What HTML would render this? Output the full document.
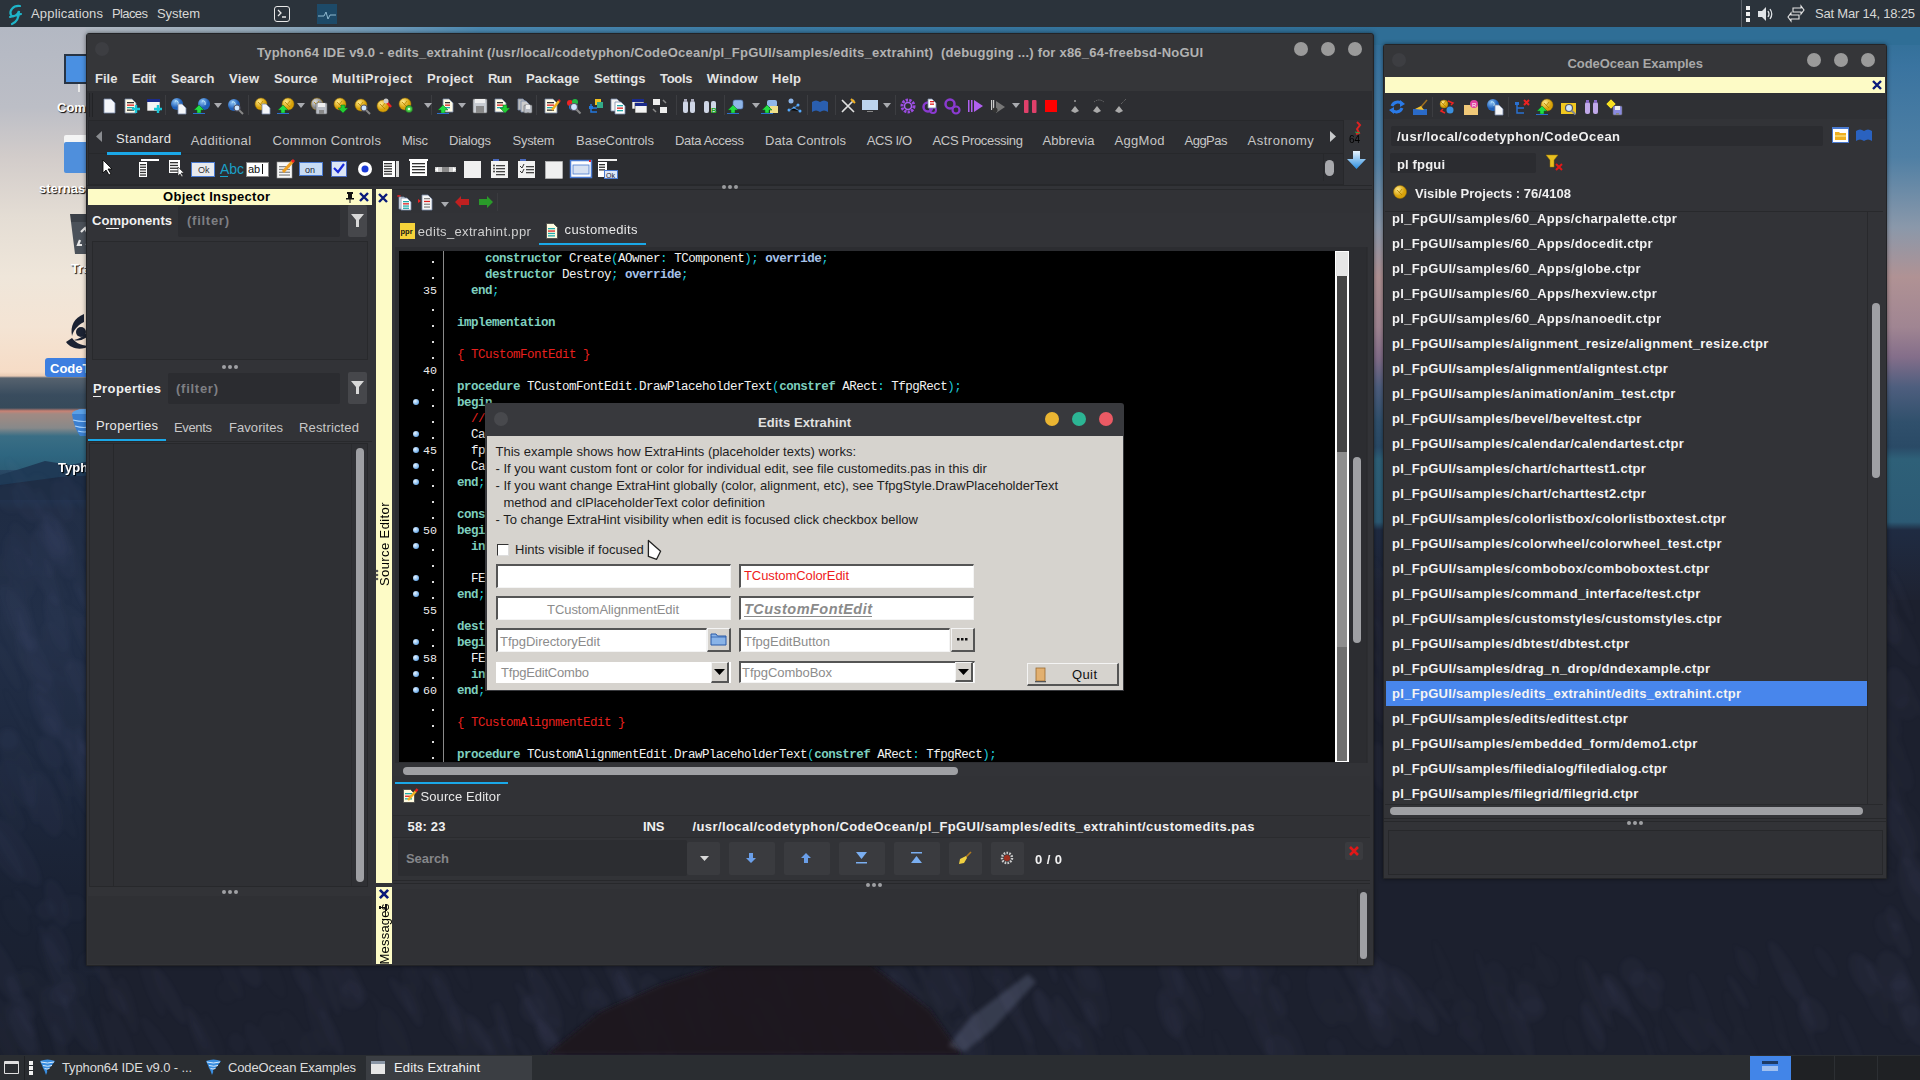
<!DOCTYPE html><html><head><meta charset="utf-8"><style>
*{margin:0;padding:0;box-sizing:border-box}
html,body{width:1920px;height:1080px;overflow:hidden;background:#222a3a}
body{position:relative;font-family:'Liberation Sans',sans-serif;font-size:13px;color:#ddd}
.a{position:absolute}
.t{position:absolute;white-space:pre;line-height:1}
svg.a{overflow:visible}
</style></head><body><div class="a" style="left:0;top:0;width:1920px;height:1080px;background:#1c202e"></div><div class="a" style="left:0;top:27px;width:300px;height:473px;background:linear-gradient(to bottom,#b3b8c3 0px,#bcbec6 80px,#d2ccca 130px,#e4ddd4 190px,#efe6da 250px,#f4e4d4 300px,#f6dcc6 345px,#e9cbb4 349px,#56626e 351px,#394c5e 368px,#364a5a 381px,#c98274 384px,#a08a84 387px,#9b8a84 391px,#87898a 401px,#3a6e85 409px,#2e6680 428px,#2c5d76 443px,#2a4f68 453px,#253449 465px,#1e2231 473px)"></div><div class="a" style="left:0;top:470px;width:100px;height:590px;background:linear-gradient(to bottom,#2a4a66 0px,#1f3350 22px,#1f2c44 40px,#222f48 150px,#1d283e 300px,#1a2234 420px,#1a1f2d 590px)"></div><svg class="a" style="left:0px;top:455px;" width="100" height="45" viewBox="0 0 100 45"><path d="M0 20 L20 14 L45 6 L70 10 L100 4 L100 45 L0 45 Z" fill="#1f3a56"/><path d="M0 30 L30 26 L60 22 L100 20 L100 45 L0 45 Z" fill="#1d2c44"/></svg><div class="a" style="left:1300px;top:27px;width:620px;height:573px;background:linear-gradient(to bottom,#2f6e96 0px,#3a74a0 40px,#4f7fa4 130px,#8a98aa 200px,#b09294 250px,#a08592 300px,#846e8a 330px,#4e5e7e 360px,#30506c 395px,#2a4a66 420px,#2e6078 432px,#2c5a74 495px,#1f2b42 503px,#1e2231 573px)"></div><div class="a" style="left:86px;top:27px;width:1834px;height:18px;background:linear-gradient(to right,#b0b8c2 0px,#98acbc 164px,#6a98b8 314px,#4a88b0 394px,#3a7aa3 714px,#2f6e96 1294px,#2f6e96 1834px)"></div><svg class="a" style="left:0;top:0" width="1920" height="1080" viewBox="0 0 1920 1080"><defs><filter id="bl"><feGaussianBlur stdDeviation="6"/></filter><filter id="b2"><feGaussianBlur stdDeviation="2"/></filter></defs><g filter="url(#b2)"><ellipse cx="41" cy="659" rx="13" ry="24" transform="rotate(-23 41 659)" fill="rgba(150,170,210,0.02)"/><ellipse cx="17" cy="644" rx="10" ry="34" transform="rotate(-29 17 644)" fill="rgba(150,170,210,0.01)"/><ellipse cx="8" cy="739" rx="11" ry="11" transform="rotate(-16 8 739)" fill="rgba(150,170,210,0.03)"/><ellipse cx="59" cy="677" rx="5" ry="10" transform="rotate(-34 59 677)" fill="rgba(150,170,210,0.02)"/><ellipse cx="17" cy="557" rx="3" ry="24" transform="rotate(-18 17 557)" fill="rgba(150,170,210,0.02)"/><ellipse cx="47" cy="685" rx="8" ry="30" transform="rotate(-29 47 685)" fill="rgba(150,170,210,0.02)"/><ellipse cx="90" cy="799" rx="12" ry="31" transform="rotate(-30 90 799)" fill="rgba(150,170,210,0.02)"/><ellipse cx="26" cy="502" rx="11" ry="22" transform="rotate(-27 26 502)" fill="rgba(150,170,210,0.03)"/><ellipse cx="86" cy="751" rx="3" ry="16" transform="rotate(-26 86 751)" fill="rgba(150,170,210,0.03)"/><ellipse cx="88" cy="607" rx="4" ry="29" transform="rotate(-30 88 607)" fill="rgba(150,170,210,0.03)"/><ellipse cx="8" cy="586" rx="14" ry="33" transform="rotate(-30 8 586)" fill="rgba(150,170,210,0.01)"/><ellipse cx="9" cy="499" rx="12" ry="15" transform="rotate(-26 9 499)" fill="rgba(150,170,210,0.02)"/><ellipse cx="17" cy="714" rx="4" ry="29" transform="rotate(-27 17 714)" fill="rgba(150,170,210,0.01)"/><ellipse cx="19" cy="566" rx="14" ry="34" transform="rotate(-17 19 566)" fill="rgba(150,170,210,0.02)"/><ellipse cx="19" cy="606" rx="12" ry="29" transform="rotate(-15 19 606)" fill="rgba(150,170,210,0.01)"/><ellipse cx="19" cy="563" rx="11" ry="20" transform="rotate(-34 19 563)" fill="rgba(150,170,210,0.02)"/><ellipse cx="8" cy="666" rx="6" ry="28" transform="rotate(-26 8 666)" fill="rgba(150,170,210,0.02)"/><ellipse cx="86" cy="635" rx="9" ry="36" transform="rotate(-32 86 635)" fill="rgba(150,170,210,0.01)"/><ellipse cx="82" cy="742" rx="6" ry="16" transform="rotate(-16 82 742)" fill="rgba(150,170,210,0.03)"/><ellipse cx="18" cy="784" rx="13" ry="28" transform="rotate(-33 18 784)" fill="rgba(150,170,210,0.02)"/><ellipse cx="3" cy="788" rx="6" ry="31" transform="rotate(-19 3 788)" fill="rgba(150,170,210,0.02)"/><ellipse cx="54" cy="574" rx="5" ry="32" transform="rotate(-30 54 574)" fill="rgba(150,170,210,0.01)"/><ellipse cx="50" cy="753" rx="10" ry="18" transform="rotate(-31 50 753)" fill="rgba(150,170,210,0.03)"/><ellipse cx="1" cy="566" rx="8" ry="12" transform="rotate(-28 1 566)" fill="rgba(150,170,210,0.01)"/><ellipse cx="51" cy="522" rx="7" ry="37" transform="rotate(-22 51 522)" fill="rgba(150,170,210,0.03)"/><ellipse cx="62" cy="667" rx="5" ry="11" transform="rotate(-17 62 667)" fill="rgba(150,170,210,0.01)"/><ellipse cx="63" cy="788" rx="3" ry="29" transform="rotate(-20 63 788)" fill="rgba(150,170,210,0.02)"/><ellipse cx="29" cy="800" rx="4" ry="26" transform="rotate(-17 29 800)" fill="rgba(150,170,210,0.03)"/><ellipse cx="66" cy="705" rx="12" ry="37" transform="rotate(-21 66 705)" fill="rgba(150,170,210,0.02)"/><ellipse cx="81" cy="759" rx="8" ry="34" transform="rotate(-24 81 759)" fill="rgba(150,170,210,0.03)"/><ellipse cx="56" cy="602" rx="9" ry="28" transform="rotate(-22 56 602)" fill="rgba(150,170,210,0.01)"/><ellipse cx="89" cy="762" rx="11" ry="22" transform="rotate(-23 89 762)" fill="rgba(150,170,210,0.03)"/><ellipse cx="40" cy="748" rx="4" ry="33" transform="rotate(-23 40 748)" fill="rgba(150,170,210,0.01)"/><ellipse cx="43" cy="554" rx="11" ry="25" transform="rotate(-17 43 554)" fill="rgba(150,170,210,0.03)"/><ellipse cx="23" cy="484" rx="6" ry="30" transform="rotate(-32 23 484)" fill="rgba(150,170,210,0.02)"/><ellipse cx="82" cy="691" rx="8" ry="37" transform="rotate(-22 82 691)" fill="rgba(150,170,210,0.02)"/><ellipse cx="18" cy="618" rx="12" ry="37" transform="rotate(-27 18 618)" fill="rgba(150,170,210,0.03)"/><ellipse cx="52" cy="581" rx="4" ry="25" transform="rotate(-18 52 581)" fill="rgba(150,170,210,0.03)"/><ellipse cx="64" cy="784" rx="6" ry="15" transform="rotate(-29 64 784)" fill="rgba(150,170,210,0.02)"/><ellipse cx="19" cy="612" rx="10" ry="25" transform="rotate(-18 19 612)" fill="rgba(150,170,210,0.02)"/><ellipse cx="88" cy="625" rx="4" ry="11" transform="rotate(-34 88 625)" fill="rgba(150,170,210,0.03)"/><ellipse cx="64" cy="663" rx="6" ry="34" transform="rotate(-32 64 663)" fill="rgba(150,170,210,0.01)"/><ellipse cx="41" cy="488" rx="12" ry="17" transform="rotate(-34 41 488)" fill="rgba(150,170,210,0.01)"/><ellipse cx="57" cy="623" rx="10" ry="30" transform="rotate(-16 57 623)" fill="rgba(150,170,210,0.03)"/><ellipse cx="62" cy="544" rx="8" ry="15" transform="rotate(-26 62 544)" fill="rgba(150,170,210,0.01)"/><ellipse cx="64" cy="537" rx="6" ry="20" transform="rotate(-25 64 537)" fill="rgba(150,170,210,0.03)"/><ellipse cx="55" cy="722" rx="7" ry="34" transform="rotate(-33 55 722)" fill="rgba(150,170,210,0.03)"/><ellipse cx="84" cy="711" rx="4" ry="24" transform="rotate(-17 84 711)" fill="rgba(150,170,210,0.03)"/><ellipse cx="34" cy="662" rx="13" ry="34" transform="rotate(-26 34 662)" fill="rgba(150,170,210,0.03)"/><ellipse cx="59" cy="546" rx="11" ry="35" transform="rotate(-21 59 546)" fill="rgba(150,170,210,0.03)"/><ellipse cx="19" cy="768" rx="14" ry="39" transform="rotate(-19 19 768)" fill="rgba(150,170,210,0.02)"/><ellipse cx="29" cy="771" rx="12" ry="20" transform="rotate(-26 29 771)" fill="rgba(150,170,210,0.01)"/><ellipse cx="50" cy="726" rx="8" ry="11" transform="rotate(-34 50 726)" fill="rgba(150,170,210,0.03)"/><ellipse cx="72" cy="535" rx="7" ry="34" transform="rotate(-32 72 535)" fill="rgba(150,170,210,0.01)"/><ellipse cx="46" cy="712" rx="12" ry="31" transform="rotate(-25 46 712)" fill="rgba(150,170,210,0.03)"/><ellipse cx="85" cy="508" rx="5" ry="26" transform="rotate(-20 85 508)" fill="rgba(150,170,210,0.02)"/><ellipse cx="57" cy="647" rx="12" ry="27" transform="rotate(-27 57 647)" fill="rgba(150,170,210,0.02)"/><ellipse cx="76" cy="768" rx="5" ry="36" transform="rotate(-25 76 768)" fill="rgba(150,170,210,0.03)"/><ellipse cx="52" cy="544" rx="9" ry="25" transform="rotate(-34 52 544)" fill="rgba(150,170,210,0.03)"/><ellipse cx="87" cy="645" rx="7" ry="34" transform="rotate(-25 87 645)" fill="rgba(150,170,210,0.02)"/><ellipse cx="62" cy="501" rx="9" ry="22" transform="rotate(-17 62 501)" fill="rgba(150,170,210,0.03)"/><ellipse cx="24" cy="631" rx="4" ry="23" transform="rotate(-17 24 631)" fill="rgba(150,170,210,0.03)"/><ellipse cx="43" cy="582" rx="5" ry="29" transform="rotate(-32 43 582)" fill="rgba(150,170,210,0.03)"/><ellipse cx="70" cy="487" rx="5" ry="17" transform="rotate(-29 70 487)" fill="rgba(150,170,210,0.03)"/><ellipse cx="32" cy="678" rx="4" ry="32" transform="rotate(-25 32 678)" fill="rgba(150,170,210,0.01)"/><ellipse cx="23" cy="543" rx="9" ry="23" transform="rotate(-27 23 543)" fill="rgba(150,170,210,0.02)"/><ellipse cx="48" cy="531" rx="5" ry="29" transform="rotate(-24 48 531)" fill="rgba(150,170,210,0.03)"/><ellipse cx="77" cy="676" rx="12" ry="17" transform="rotate(-19 77 676)" fill="rgba(150,170,210,0.03)"/><ellipse cx="81" cy="581" rx="6" ry="38" transform="rotate(-15 81 581)" fill="rgba(150,170,210,0.02)"/><ellipse cx="80" cy="523" rx="6" ry="32" transform="rotate(-33 80 523)" fill="rgba(150,170,210,0.02)"/><ellipse cx="75" cy="908" rx="12" ry="14" transform="rotate(-21 75 908)" fill="rgba(150,170,210,0.02)"/><ellipse cx="2" cy="851" rx="11" ry="37" transform="rotate(-33 2 851)" fill="rgba(150,170,210,0.03)"/><ellipse cx="46" cy="993" rx="9" ry="31" transform="rotate(-34 46 993)" fill="rgba(150,170,210,0.01)"/><ellipse cx="10" cy="810" rx="9" ry="25" transform="rotate(-32 10 810)" fill="rgba(150,170,210,0.02)"/><ellipse cx="17" cy="852" rx="12" ry="40" transform="rotate(-33 17 852)" fill="rgba(150,170,210,0.03)"/><ellipse cx="6" cy="1043" rx="8" ry="33" transform="rotate(-26 6 1043)" fill="rgba(150,170,210,0.02)"/><ellipse cx="46" cy="910" rx="10" ry="10" transform="rotate(-18 46 910)" fill="rgba(150,170,210,0.03)"/><ellipse cx="16" cy="916" rx="11" ry="22" transform="rotate(-32 16 916)" fill="rgba(150,170,210,0.01)"/><ellipse cx="46" cy="804" rx="13" ry="34" transform="rotate(-18 46 804)" fill="rgba(150,170,210,0.03)"/><ellipse cx="57" cy="903" rx="10" ry="25" transform="rotate(-19 57 903)" fill="rgba(150,170,210,0.03)"/><ellipse cx="23" cy="1032" rx="11" ry="33" transform="rotate(-27 23 1032)" fill="rgba(150,170,210,0.03)"/><ellipse cx="81" cy="1024" rx="11" ry="33" transform="rotate(-27 81 1024)" fill="rgba(150,170,210,0.03)"/><ellipse cx="65" cy="818" rx="7" ry="24" transform="rotate(-28 65 818)" fill="rgba(150,170,210,0.01)"/><ellipse cx="57" cy="959" rx="6" ry="38" transform="rotate(-28 57 959)" fill="rgba(150,170,210,0.03)"/><ellipse cx="59" cy="945" rx="9" ry="22" transform="rotate(-22 59 945)" fill="rgba(150,170,210,0.03)"/><ellipse cx="63" cy="994" rx="14" ry="11" transform="rotate(-20 63 994)" fill="rgba(150,170,210,0.03)"/><ellipse cx="23" cy="902" rx="4" ry="16" transform="rotate(-33 23 902)" fill="rgba(150,170,210,0.02)"/><ellipse cx="23" cy="1031" rx="9" ry="25" transform="rotate(-24 23 1031)" fill="rgba(150,170,210,0.03)"/><ellipse cx="90" cy="963" rx="12" ry="12" transform="rotate(-20 90 963)" fill="rgba(150,170,210,0.02)"/><ellipse cx="4" cy="1037" rx="5" ry="24" transform="rotate(-25 4 1037)" fill="rgba(150,170,210,0.01)"/><ellipse cx="1382" cy="589" rx="13" ry="23" transform="rotate(-23 1382 589)" fill="rgba(150,170,210,0.02)"/><ellipse cx="1377" cy="701" rx="10" ry="27" transform="rotate(-21 1377 701)" fill="rgba(150,170,210,0.02)"/><ellipse cx="1376" cy="567" rx="6" ry="11" transform="rotate(-20 1376 567)" fill="rgba(150,170,210,0.01)"/><ellipse cx="1378" cy="1004" rx="11" ry="12" transform="rotate(-16 1378 1004)" fill="rgba(150,170,210,0.03)"/><ellipse cx="1371" cy="1008" rx="8" ry="24" transform="rotate(-30 1371 1008)" fill="rgba(150,170,210,0.03)"/><ellipse cx="1380" cy="1024" rx="11" ry="24" transform="rotate(-19 1380 1024)" fill="rgba(150,170,210,0.03)"/><ellipse cx="1382" cy="617" rx="10" ry="24" transform="rotate(-34 1382 617)" fill="rgba(150,170,210,0.02)"/><ellipse cx="1381" cy="622" rx="8" ry="30" transform="rotate(-30 1381 622)" fill="rgba(150,170,210,0.02)"/><ellipse cx="1382" cy="768" rx="12" ry="26" transform="rotate(-16 1382 768)" fill="rgba(150,170,210,0.03)"/><ellipse cx="1385" cy="678" rx="4" ry="37" transform="rotate(-23 1385 678)" fill="rgba(150,170,210,0.03)"/><ellipse cx="1377" cy="694" rx="11" ry="27" transform="rotate(-22 1377 694)" fill="rgba(150,170,210,0.02)"/><ellipse cx="1385" cy="654" rx="6" ry="39" transform="rotate(-17 1385 654)" fill="rgba(150,170,210,0.03)"/><ellipse cx="1882" cy="590" rx="6" ry="23" transform="rotate(-33 1882 590)" fill="rgba(150,170,210,0.03)"/><ellipse cx="1902" cy="596" rx="4" ry="30" transform="rotate(-22 1902 596)" fill="rgba(150,170,210,0.02)"/><ellipse cx="1895" cy="797" rx="5" ry="20" transform="rotate(-18 1895 797)" fill="rgba(150,170,210,0.03)"/><ellipse cx="1883" cy="619" rx="12" ry="29" transform="rotate(-31 1883 619)" fill="rgba(150,170,210,0.03)"/><ellipse cx="1897" cy="688" rx="12" ry="21" transform="rotate(-15 1897 688)" fill="rgba(150,170,210,0.03)"/><ellipse cx="1893" cy="832" rx="11" ry="38" transform="rotate(-28 1893 832)" fill="rgba(150,170,210,0.02)"/><ellipse cx="1884" cy="993" rx="4" ry="12" transform="rotate(-25 1884 993)" fill="rgba(150,170,210,0.02)"/><ellipse cx="1907" cy="708" rx="12" ry="12" transform="rotate(-22 1907 708)" fill="rgba(150,170,210,0.02)"/><ellipse cx="1883" cy="710" rx="11" ry="31" transform="rotate(-32 1883 710)" fill="rgba(150,170,210,0.02)"/><ellipse cx="1894" cy="919" rx="7" ry="14" transform="rotate(-24 1894 919)" fill="rgba(150,170,210,0.03)"/><ellipse cx="1917" cy="1025" rx="13" ry="23" transform="rotate(-29 1917 1025)" fill="rgba(150,170,210,0.03)"/><ellipse cx="1893" cy="758" rx="13" ry="37" transform="rotate(-28 1893 758)" fill="rgba(150,170,210,0.02)"/><ellipse cx="1895" cy="740" rx="7" ry="22" transform="rotate(-24 1895 740)" fill="rgba(150,170,210,0.01)"/><ellipse cx="1912" cy="828" rx="12" ry="27" transform="rotate(-20 1912 828)" fill="rgba(150,170,210,0.01)"/><ellipse cx="1915" cy="699" rx="3" ry="25" transform="rotate(-24 1915 699)" fill="rgba(150,170,210,0.02)"/><ellipse cx="1919" cy="882" rx="12" ry="12" transform="rotate(-19 1919 882)" fill="rgba(150,170,210,0.02)"/><ellipse cx="1883" cy="600" rx="11" ry="37" transform="rotate(-22 1883 600)" fill="rgba(150,170,210,0.01)"/><ellipse cx="1886" cy="929" rx="10" ry="17" transform="rotate(-20 1886 929)" fill="rgba(150,170,210,0.02)"/><ellipse cx="1901" cy="939" rx="7" ry="20" transform="rotate(-22 1901 939)" fill="rgba(150,170,210,0.03)"/><ellipse cx="1900" cy="826" rx="11" ry="31" transform="rotate(-27 1900 826)" fill="rgba(150,170,210,0.03)"/><ellipse cx="1913" cy="890" rx="12" ry="34" transform="rotate(-17 1913 890)" fill="rgba(150,170,210,0.03)"/><ellipse cx="1918" cy="877" rx="9" ry="31" transform="rotate(-27 1918 877)" fill="rgba(150,170,210,0.03)"/><ellipse cx="1897" cy="632" rx="11" ry="40" transform="rotate(-32 1897 632)" fill="rgba(150,170,210,0.02)"/><ellipse cx="1888" cy="770" rx="6" ry="39" transform="rotate(-29 1888 770)" fill="rgba(150,170,210,0.01)"/><ellipse cx="1885" cy="881" rx="12" ry="15" transform="rotate(-26 1885 881)" fill="rgba(150,170,210,0.01)"/><ellipse cx="1121" cy="1047" rx="3" ry="13" transform="rotate(-31 1121 1047)" fill="rgba(150,170,210,0.01)"/><ellipse cx="452" cy="1029" rx="10" ry="17" transform="rotate(-29 452 1029)" fill="rgba(150,170,210,0.01)"/><ellipse cx="331" cy="1032" rx="6" ry="26" transform="rotate(-25 331 1032)" fill="rgba(150,170,210,0.03)"/><ellipse cx="500" cy="1045" rx="13" ry="20" transform="rotate(-16 500 1045)" fill="rgba(150,170,210,0.02)"/><ellipse cx="927" cy="983" rx="4" ry="38" transform="rotate(-27 927 983)" fill="rgba(150,170,210,0.03)"/><ellipse cx="1013" cy="1010" rx="6" ry="40" transform="rotate(-30 1013 1010)" fill="rgba(150,170,210,0.03)"/><ellipse cx="21" cy="1006" rx="7" ry="34" transform="rotate(-23 21 1006)" fill="rgba(150,170,210,0.03)"/><ellipse cx="302" cy="977" rx="7" ry="18" transform="rotate(-25 302 977)" fill="rgba(150,170,210,0.03)"/><ellipse cx="1223" cy="1054" rx="6" ry="26" transform="rotate(-20 1223 1054)" fill="rgba(150,170,210,0.01)"/><ellipse cx="3" cy="1038" rx="12" ry="35" transform="rotate(-30 3 1038)" fill="rgba(150,170,210,0.01)"/><ellipse cx="1376" cy="971" rx="8" ry="24" transform="rotate(-23 1376 971)" fill="rgba(150,170,210,0.03)"/><ellipse cx="1646" cy="990" rx="12" ry="23" transform="rotate(-33 1646 990)" fill="rgba(150,170,210,0.03)"/><ellipse cx="1587" cy="981" rx="9" ry="26" transform="rotate(-18 1587 981)" fill="rgba(150,170,210,0.01)"/><ellipse cx="598" cy="991" rx="4" ry="19" transform="rotate(-21 598 991)" fill="rgba(150,170,210,0.02)"/><ellipse cx="691" cy="1026" rx="4" ry="22" transform="rotate(-16 691 1026)" fill="rgba(150,170,210,0.02)"/><ellipse cx="1593" cy="1023" rx="3" ry="21" transform="rotate(-30 1593 1023)" fill="rgba(150,170,210,0.03)"/><ellipse cx="1083" cy="1005" rx="3" ry="40" transform="rotate(-31 1083 1005)" fill="rgba(150,170,210,0.03)"/><ellipse cx="1183" cy="989" rx="7" ry="26" transform="rotate(-28 1183 989)" fill="rgba(150,170,210,0.02)"/><ellipse cx="753" cy="1024" rx="6" ry="16" transform="rotate(-28 753 1024)" fill="rgba(150,170,210,0.03)"/><ellipse cx="1814" cy="1014" rx="11" ry="20" transform="rotate(-33 1814 1014)" fill="rgba(150,170,210,0.03)"/><ellipse cx="270" cy="971" rx="10" ry="31" transform="rotate(-27 270 971)" fill="rgba(150,170,210,0.01)"/><ellipse cx="1607" cy="1017" rx="4" ry="17" transform="rotate(-33 1607 1017)" fill="rgba(150,170,210,0.01)"/><ellipse cx="781" cy="969" rx="13" ry="23" transform="rotate(-22 781 969)" fill="rgba(150,170,210,0.02)"/><ellipse cx="1472" cy="1038" rx="7" ry="20" transform="rotate(-35 1472 1038)" fill="rgba(150,170,210,0.02)"/><ellipse cx="769" cy="1027" rx="14" ry="34" transform="rotate(-23 769 1027)" fill="rgba(150,170,210,0.03)"/><ellipse cx="36" cy="993" rx="7" ry="30" transform="rotate(-27 36 993)" fill="rgba(150,170,210,0.01)"/><ellipse cx="978" cy="1035" rx="12" ry="28" transform="rotate(-20 978 1035)" fill="rgba(150,170,210,0.01)"/><ellipse cx="1734" cy="1013" rx="7" ry="25" transform="rotate(-21 1734 1013)" fill="rgba(150,170,210,0.01)"/><ellipse cx="1895" cy="1010" rx="11" ry="35" transform="rotate(-16 1895 1010)" fill="rgba(150,170,210,0.01)"/><ellipse cx="1204" cy="980" rx="4" ry="17" transform="rotate(-21 1204 980)" fill="rgba(150,170,210,0.02)"/><ellipse cx="632" cy="1048" rx="7" ry="24" transform="rotate(-16 632 1048)" fill="rgba(150,170,210,0.01)"/><ellipse cx="260" cy="1046" rx="9" ry="27" transform="rotate(-30 260 1046)" fill="rgba(150,170,210,0.02)"/><ellipse cx="1746" cy="1054" rx="12" ry="28" transform="rotate(-19 1746 1054)" fill="rgba(150,170,210,0.01)"/><ellipse cx="554" cy="1045" rx="6" ry="27" transform="rotate(-31 554 1045)" fill="rgba(150,170,210,0.03)"/><ellipse cx="1052" cy="969" rx="3" ry="15" transform="rotate(-16 1052 969)" fill="rgba(150,170,210,0.03)"/><ellipse cx="1264" cy="991" rx="10" ry="32" transform="rotate(-23 1264 991)" fill="rgba(150,170,210,0.02)"/><ellipse cx="1543" cy="964" rx="5" ry="24" transform="rotate(-27 1543 964)" fill="rgba(150,170,210,0.01)"/><ellipse cx="1093" cy="978" rx="9" ry="18" transform="rotate(-28 1093 978)" fill="rgba(150,170,210,0.02)"/><ellipse cx="1232" cy="966" rx="10" ry="14" transform="rotate(-23 1232 966)" fill="rgba(150,170,210,0.03)"/><ellipse cx="902" cy="1000" rx="10" ry="31" transform="rotate(-20 902 1000)" fill="rgba(150,170,210,0.03)"/><ellipse cx="933" cy="1054" rx="12" ry="36" transform="rotate(-26 933 1054)" fill="rgba(150,170,210,0.02)"/><ellipse cx="1087" cy="1046" rx="9" ry="26" transform="rotate(-17 1087 1046)" fill="rgba(150,170,210,0.02)"/><ellipse cx="616" cy="967" rx="11" ry="37" transform="rotate(-23 616 967)" fill="rgba(150,170,210,0.03)"/><ellipse cx="1444" cy="990" rx="10" ry="12" transform="rotate(-26 1444 990)" fill="rgba(150,170,210,0.01)"/><ellipse cx="965" cy="999" rx="4" ry="31" transform="rotate(-30 965 999)" fill="rgba(150,170,210,0.02)"/><ellipse cx="588" cy="999" rx="6" ry="12" transform="rotate(-16 588 999)" fill="rgba(150,170,210,0.03)"/><ellipse cx="1278" cy="1043" rx="8" ry="34" transform="rotate(-20 1278 1043)" fill="rgba(150,170,210,0.02)"/><ellipse cx="1088" cy="1046" rx="4" ry="34" transform="rotate(-24 1088 1046)" fill="rgba(150,170,210,0.01)"/><ellipse cx="1826" cy="962" rx="6" ry="19" transform="rotate(-34 1826 962)" fill="rgba(150,170,210,0.02)"/><ellipse cx="1719" cy="1038" rx="7" ry="21" transform="rotate(-34 1719 1038)" fill="rgba(150,170,210,0.02)"/><ellipse cx="60" cy="1046" rx="6" ry="25" transform="rotate(-15 60 1046)" fill="rgba(150,170,210,0.03)"/><ellipse cx="907" cy="981" rx="6" ry="38" transform="rotate(-31 907 981)" fill="rgba(150,170,210,0.03)"/><ellipse cx="1609" cy="995" rx="8" ry="15" transform="rotate(-15 1609 995)" fill="rgba(150,170,210,0.03)"/><ellipse cx="388" cy="1021" rx="5" ry="36" transform="rotate(-33 388 1021)" fill="rgba(150,170,210,0.01)"/><ellipse cx="1393" cy="991" rx="13" ry="36" transform="rotate(-32 1393 991)" fill="rgba(150,170,210,0.03)"/><ellipse cx="1336" cy="1049" rx="8" ry="12" transform="rotate(-29 1336 1049)" fill="rgba(150,170,210,0.02)"/><ellipse cx="1364" cy="980" rx="5" ry="17" transform="rotate(-19 1364 980)" fill="rgba(150,170,210,0.03)"/><ellipse cx="715" cy="1024" rx="13" ry="28" transform="rotate(-29 715 1024)" fill="rgba(150,170,210,0.02)"/><ellipse cx="1779" cy="1024" rx="6" ry="29" transform="rotate(-15 1779 1024)" fill="rgba(150,170,210,0.01)"/><ellipse cx="845" cy="1011" rx="9" ry="11" transform="rotate(-29 845 1011)" fill="rgba(150,170,210,0.02)"/><ellipse cx="482" cy="1037" rx="4" ry="19" transform="rotate(-30 482 1037)" fill="rgba(150,170,210,0.03)"/><ellipse cx="536" cy="1013" rx="5" ry="37" transform="rotate(-34 536 1013)" fill="rgba(150,170,210,0.03)"/><ellipse cx="886" cy="1032" rx="7" ry="38" transform="rotate(-31 886 1032)" fill="rgba(150,170,210,0.02)"/><ellipse cx="1068" cy="1022" rx="7" ry="30" transform="rotate(-25 1068 1022)" fill="rgba(150,170,210,0.03)"/><ellipse cx="971" cy="1041" rx="11" ry="26" transform="rotate(-32 971 1041)" fill="rgba(150,170,210,0.03)"/><ellipse cx="1497" cy="977" rx="10" ry="17" transform="rotate(-20 1497 977)" fill="rgba(150,170,210,0.02)"/><ellipse cx="1510" cy="1036" rx="6" ry="25" transform="rotate(-23 1510 1036)" fill="rgba(150,170,210,0.02)"/><ellipse cx="958" cy="965" rx="10" ry="31" transform="rotate(-18 958 965)" fill="rgba(150,170,210,0.02)"/><ellipse cx="346" cy="976" rx="3" ry="25" transform="rotate(-26 346 976)" fill="rgba(150,170,210,0.02)"/><ellipse cx="505" cy="1036" rx="4" ry="37" transform="rotate(-24 505 1036)" fill="rgba(150,170,210,0.02)"/><ellipse cx="1520" cy="984" rx="5" ry="19" transform="rotate(-29 1520 984)" fill="rgba(150,170,210,0.01)"/><ellipse cx="1193" cy="1011" rx="6" ry="28" transform="rotate(-19 1193 1011)" fill="rgba(150,170,210,0.01)"/><ellipse cx="329" cy="986" rx="5" ry="31" transform="rotate(-19 329 986)" fill="rgba(150,170,210,0.03)"/><ellipse cx="117" cy="1000" rx="7" ry="16" transform="rotate(-34 117 1000)" fill="rgba(150,170,210,0.03)"/><ellipse cx="940" cy="1033" rx="14" ry="14" transform="rotate(-20 940 1033)" fill="rgba(150,170,210,0.02)"/><ellipse cx="75" cy="984" rx="13" ry="14" transform="rotate(-29 75 984)" fill="rgba(150,170,210,0.02)"/><ellipse cx="815" cy="969" rx="3" ry="40" transform="rotate(-20 815 969)" fill="rgba(150,170,210,0.03)"/><ellipse cx="441" cy="986" rx="9" ry="17" transform="rotate(-16 441 986)" fill="rgba(150,170,210,0.02)"/><ellipse cx="699" cy="993" rx="14" ry="28" transform="rotate(-27 699 993)" fill="rgba(150,170,210,0.01)"/><ellipse cx="1248" cy="967" rx="7" ry="31" transform="rotate(-23 1248 967)" fill="rgba(150,170,210,0.03)"/><ellipse cx="1702" cy="1005" rx="7" ry="35" transform="rotate(-19 1702 1005)" fill="rgba(150,170,210,0.02)"/><ellipse cx="414" cy="994" rx="5" ry="26" transform="rotate(-31 414 994)" fill="rgba(150,170,210,0.01)"/><ellipse cx="412" cy="1005" rx="6" ry="23" transform="rotate(-21 412 1005)" fill="rgba(150,170,210,0.03)"/><ellipse cx="1656" cy="981" rx="7" ry="12" transform="rotate(-28 1656 981)" fill="rgba(150,170,210,0.03)"/><ellipse cx="527" cy="964" rx="5" ry="18" transform="rotate(-17 527 964)" fill="rgba(150,170,210,0.02)"/><ellipse cx="1373" cy="987" rx="7" ry="15" transform="rotate(-28 1373 987)" fill="rgba(150,170,210,0.03)"/><ellipse cx="1470" cy="1029" rx="13" ry="11" transform="rotate(-27 1470 1029)" fill="rgba(150,170,210,0.02)"/><ellipse cx="160" cy="1044" rx="7" ry="33" transform="rotate(-34 160 1044)" fill="rgba(150,170,210,0.02)"/><ellipse cx="756" cy="984" rx="3" ry="15" transform="rotate(-34 756 984)" fill="rgba(150,170,210,0.02)"/><ellipse cx="600" cy="1001" rx="9" ry="14" transform="rotate(-30 600 1001)" fill="rgba(150,170,210,0.03)"/><ellipse cx="1393" cy="1024" rx="5" ry="16" transform="rotate(-21 1393 1024)" fill="rgba(150,170,210,0.02)"/><ellipse cx="778" cy="998" rx="13" ry="17" transform="rotate(-28 778 998)" fill="rgba(150,170,210,0.02)"/><ellipse cx="414" cy="966" rx="3" ry="29" transform="rotate(-19 414 966)" fill="rgba(150,170,210,0.02)"/><ellipse cx="1873" cy="990" rx="10" ry="38" transform="rotate(-21 1873 990)" fill="rgba(150,170,210,0.02)"/><ellipse cx="1280" cy="1051" rx="13" ry="17" transform="rotate(-33 1280 1051)" fill="rgba(150,170,210,0.03)"/><ellipse cx="821" cy="998" rx="4" ry="22" transform="rotate(-25 821 998)" fill="rgba(150,170,210,0.02)"/><ellipse cx="537" cy="977" rx="7" ry="24" transform="rotate(-22 537 977)" fill="rgba(150,170,210,0.01)"/><ellipse cx="460" cy="971" rx="7" ry="23" transform="rotate(-23 460 971)" fill="rgba(150,170,210,0.01)"/><ellipse cx="1347" cy="1013" rx="11" ry="11" transform="rotate(-28 1347 1013)" fill="rgba(150,170,210,0.02)"/><ellipse cx="121" cy="1000" rx="4" ry="25" transform="rotate(-26 121 1000)" fill="rgba(150,170,210,0.02)"/><ellipse cx="625" cy="986" rx="3" ry="20" transform="rotate(-24 625 986)" fill="rgba(150,170,210,0.03)"/><ellipse cx="503" cy="1024" rx="5" ry="24" transform="rotate(-16 503 1024)" fill="rgba(150,170,210,0.03)"/><ellipse cx="696" cy="1016" rx="13" ry="33" transform="rotate(-23 696 1016)" fill="rgba(150,170,210,0.03)"/><ellipse cx="789" cy="1001" rx="6" ry="35" transform="rotate(-27 789 1001)" fill="rgba(150,170,210,0.03)"/><ellipse cx="1746" cy="966" rx="4" ry="25" transform="rotate(-28 1746 966)" fill="rgba(150,170,210,0.02)"/><ellipse cx="1876" cy="976" rx="5" ry="17" transform="rotate(-30 1876 976)" fill="rgba(150,170,210,0.03)"/><ellipse cx="2" cy="1013" rx="7" ry="17" transform="rotate(-22 2 1013)" fill="rgba(150,170,210,0.02)"/><ellipse cx="1052" cy="1020" rx="9" ry="35" transform="rotate(-28 1052 1020)" fill="rgba(150,170,210,0.03)"/><ellipse cx="666" cy="1044" rx="6" ry="31" transform="rotate(-21 666 1044)" fill="rgba(150,170,210,0.03)"/><ellipse cx="1851" cy="1039" rx="5" ry="29" transform="rotate(-24 1851 1039)" fill="rgba(150,170,210,0.02)"/><ellipse cx="709" cy="989" rx="11" ry="26" transform="rotate(-30 709 989)" fill="rgba(150,170,210,0.02)"/><ellipse cx="624" cy="979" rx="9" ry="14" transform="rotate(-34 624 979)" fill="rgba(150,170,210,0.01)"/><ellipse cx="196" cy="1028" rx="4" ry="24" transform="rotate(-25 196 1028)" fill="rgba(150,170,210,0.03)"/><ellipse cx="312" cy="1043" rx="13" ry="12" transform="rotate(-25 312 1043)" fill="rgba(150,170,210,0.02)"/><ellipse cx="1529" cy="998" rx="11" ry="18" transform="rotate(-28 1529 998)" fill="rgba(150,170,210,0.03)"/><ellipse cx="641" cy="1033" rx="12" ry="35" transform="rotate(-27 641 1033)" fill="rgba(150,170,210,0.02)"/><ellipse cx="1357" cy="1020" rx="12" ry="34" transform="rotate(-27 1357 1020)" fill="rgba(150,170,210,0.01)"/><ellipse cx="1285" cy="983" rx="5" ry="10" transform="rotate(-16 1285 983)" fill="rgba(150,170,210,0.02)"/><ellipse cx="1863" cy="974" rx="11" ry="23" transform="rotate(-27 1863 974)" fill="rgba(150,170,210,0.03)"/><ellipse cx="1792" cy="1054" rx="4" ry="31" transform="rotate(-34 1792 1054)" fill="rgba(150,170,210,0.01)"/><ellipse cx="549" cy="1030" rx="14" ry="14" transform="rotate(-34 549 1030)" fill="rgba(150,170,210,0.02)"/><ellipse cx="1042" cy="1007" rx="7" ry="19" transform="rotate(-18 1042 1007)" fill="rgba(150,170,210,0.03)"/><ellipse cx="545" cy="998" rx="10" ry="33" transform="rotate(-27 545 998)" fill="rgba(150,170,210,0.03)"/><ellipse cx="1333" cy="1013" rx="12" ry="14" transform="rotate(-33 1333 1013)" fill="rgba(150,170,210,0.01)"/><ellipse cx="1792" cy="985" rx="8" ry="14" transform="rotate(-35 1792 985)" fill="rgba(150,170,210,0.02)"/><ellipse cx="1087" cy="975" rx="10" ry="18" transform="rotate(-25 1087 975)" fill="rgba(150,170,210,0.02)"/><ellipse cx="702" cy="986" rx="4" ry="12" transform="rotate(-29 702 986)" fill="rgba(150,170,210,0.03)"/><ellipse cx="151" cy="979" rx="8" ry="40" transform="rotate(-18 151 979)" fill="rgba(150,170,210,0.02)"/><ellipse cx="930" cy="1001" rx="12" ry="22" transform="rotate(-24 930 1001)" fill="rgba(150,170,210,0.01)"/><ellipse cx="1261" cy="1020" rx="6" ry="38" transform="rotate(-15 1261 1020)" fill="rgba(150,170,210,0.03)"/><ellipse cx="851" cy="1040" rx="11" ry="15" transform="rotate(-32 851 1040)" fill="rgba(150,170,210,0.01)"/><ellipse cx="228" cy="969" rx="7" ry="33" transform="rotate(-25 228 969)" fill="rgba(150,170,210,0.02)"/><ellipse cx="20" cy="982" rx="14" ry="10" transform="rotate(-19 20 982)" fill="rgba(150,170,210,0.02)"/><ellipse cx="1521" cy="1030" rx="7" ry="34" transform="rotate(-20 1521 1030)" fill="rgba(150,170,210,0.03)"/><ellipse cx="1893" cy="971" rx="13" ry="22" transform="rotate(-30 1893 971)" fill="rgba(150,170,210,0.03)"/><ellipse cx="1747" cy="964" rx="9" ry="17" transform="rotate(-28 1747 964)" fill="rgba(150,170,210,0.02)"/><ellipse cx="1261" cy="1037" rx="7" ry="29" transform="rotate(-29 1261 1037)" fill="rgba(150,170,210,0.02)"/><ellipse cx="1738" cy="992" rx="4" ry="20" transform="rotate(-31 1738 992)" fill="rgba(150,170,210,0.03)"/><ellipse cx="1427" cy="1013" rx="10" ry="15" transform="rotate(-32 1427 1013)" fill="rgba(150,170,210,0.01)"/><ellipse cx="673" cy="1002" rx="3" ry="25" transform="rotate(-29 673 1002)" fill="rgba(150,170,210,0.02)"/><ellipse cx="1031" cy="1051" rx="5" ry="36" transform="rotate(-20 1031 1051)" fill="rgba(150,170,210,0.02)"/><ellipse cx="208" cy="1054" rx="8" ry="39" transform="rotate(-27 208 1054)" fill="rgba(150,170,210,0.02)"/><ellipse cx="1356" cy="979" rx="6" ry="30" transform="rotate(-29 1356 979)" fill="rgba(150,170,210,0.03)"/><ellipse cx="352" cy="995" rx="14" ry="14" transform="rotate(-27 352 995)" fill="rgba(150,170,210,0.03)"/><ellipse cx="1236" cy="982" rx="10" ry="37" transform="rotate(-22 1236 982)" fill="rgba(150,170,210,0.03)"/><ellipse cx="969" cy="1015" rx="4" ry="35" transform="rotate(-26 969 1015)" fill="rgba(150,170,210,0.03)"/><ellipse cx="1278" cy="1001" rx="7" ry="17" transform="rotate(-24 1278 1001)" fill="rgba(150,170,210,0.03)"/><ellipse cx="989" cy="965" rx="10" ry="23" transform="rotate(-23 989 965)" fill="rgba(150,170,210,0.02)"/><ellipse cx="1789" cy="976" rx="8" ry="40" transform="rotate(-29 1789 976)" fill="rgba(150,170,210,0.03)"/><ellipse cx="1415" cy="1054" rx="7" ry="36" transform="rotate(-15 1415 1054)" fill="rgba(150,170,210,0.01)"/><ellipse cx="943" cy="984" rx="12" ry="29" transform="rotate(-18 943 984)" fill="rgba(150,170,210,0.03)"/><ellipse cx="1532" cy="1010" rx="14" ry="12" transform="rotate(-21 1532 1010)" fill="rgba(150,170,210,0.03)"/><ellipse cx="481" cy="1037" rx="8" ry="26" transform="rotate(-31 481 1037)" fill="rgba(150,170,210,0.03)"/><ellipse cx="537" cy="1022" rx="4" ry="27" transform="rotate(-25 537 1022)" fill="rgba(150,170,210,0.03)"/><ellipse cx="464" cy="1036" rx="12" ry="33" transform="rotate(-17 464 1036)" fill="rgba(150,170,210,0.02)"/><ellipse cx="1530" cy="976" rx="7" ry="13" transform="rotate(-28 1530 976)" fill="rgba(150,170,210,0.01)"/><ellipse cx="1661" cy="1040" rx="4" ry="15" transform="rotate(-18 1661 1040)" fill="rgba(150,170,210,0.02)"/><ellipse cx="1185" cy="1046" rx="4" ry="40" transform="rotate(-22 1185 1046)" fill="rgba(150,170,210,0.02)"/><ellipse cx="1683" cy="1030" rx="5" ry="30" transform="rotate(-35 1683 1030)" fill="rgba(150,170,210,0.02)"/><ellipse cx="652" cy="991" rx="10" ry="18" transform="rotate(-21 652 991)" fill="rgba(150,170,210,0.03)"/><ellipse cx="347" cy="974" rx="11" ry="24" transform="rotate(-33 347 974)" fill="rgba(150,170,210,0.01)"/><ellipse cx="1807" cy="1019" rx="7" ry="16" transform="rotate(-21 1807 1019)" fill="rgba(150,170,210,0.03)"/><ellipse cx="1414" cy="996" rx="6" ry="22" transform="rotate(-22 1414 996)" fill="rgba(150,170,210,0.01)"/><ellipse cx="815" cy="1038" rx="7" ry="24" transform="rotate(-16 815 1038)" fill="rgba(150,170,210,0.02)"/><ellipse cx="665" cy="1027" rx="6" ry="27" transform="rotate(-18 665 1027)" fill="rgba(150,170,210,0.02)"/><ellipse cx="550" cy="1041" rx="10" ry="24" transform="rotate(-27 550 1041)" fill="rgba(150,170,210,0.03)"/><ellipse cx="1427" cy="1018" rx="8" ry="12" transform="rotate(-29 1427 1018)" fill="rgba(150,170,210,0.02)"/><ellipse cx="847" cy="1051" rx="6" ry="31" transform="rotate(-30 847 1051)" fill="rgba(150,170,210,0.03)"/><ellipse cx="790" cy="974" rx="13" ry="18" transform="rotate(-28 790 974)" fill="rgba(150,170,210,0.02)"/><ellipse cx="1575" cy="1041" rx="9" ry="26" transform="rotate(-17 1575 1041)" fill="rgba(150,170,210,0.01)"/><ellipse cx="170" cy="996" rx="7" ry="32" transform="rotate(-28 170 996)" fill="rgba(150,170,210,0.03)"/><ellipse cx="1724" cy="1050" rx="3" ry="29" transform="rotate(-28 1724 1050)" fill="rgba(150,170,210,0.02)"/><ellipse cx="892" cy="991" rx="10" ry="28" transform="rotate(-15 892 991)" fill="rgba(150,170,210,0.03)"/><ellipse cx="1906" cy="999" rx="12" ry="29" transform="rotate(-15 1906 999)" fill="rgba(150,170,210,0.03)"/><ellipse cx="128" cy="1005" rx="7" ry="30" transform="rotate(-15 128 1005)" fill="rgba(150,170,210,0.02)"/><ellipse cx="402" cy="996" rx="5" ry="22" transform="rotate(-33 402 996)" fill="rgba(150,170,210,0.03)"/><ellipse cx="320" cy="1022" rx="10" ry="32" transform="rotate(-19 320 1022)" fill="rgba(150,170,210,0.02)"/><ellipse cx="1403" cy="1034" rx="4" ry="24" transform="rotate(-18 1403 1034)" fill="rgba(150,170,210,0.01)"/><ellipse cx="1814" cy="1045" rx="3" ry="21" transform="rotate(-24 1814 1045)" fill="rgba(150,170,210,0.02)"/><ellipse cx="214" cy="1035" rx="6" ry="25" transform="rotate(-24 214 1035)" fill="rgba(150,170,210,0.01)"/><ellipse cx="249" cy="970" rx="9" ry="19" transform="rotate(-30 249 970)" fill="rgba(150,170,210,0.03)"/><ellipse cx="795" cy="967" rx="5" ry="24" transform="rotate(-26 795 967)" fill="rgba(150,170,210,0.02)"/><ellipse cx="1633" cy="972" rx="12" ry="15" transform="rotate(-25 1633 972)" fill="rgba(150,170,210,0.03)"/><ellipse cx="780" cy="1019" rx="13" ry="39" transform="rotate(-35 780 1019)" fill="rgba(150,170,210,0.02)"/><ellipse cx="295" cy="1038" rx="11" ry="31" transform="rotate(-24 295 1038)" fill="rgba(150,170,210,0.01)"/><ellipse cx="55" cy="972" rx="6" ry="39" transform="rotate(-18 55 972)" fill="rgba(150,170,210,0.03)"/><ellipse cx="88" cy="1001" rx="4" ry="18" transform="rotate(-17 88 1001)" fill="rgba(150,170,210,0.01)"/><ellipse cx="631" cy="1007" rx="10" ry="37" transform="rotate(-24 631 1007)" fill="rgba(150,170,210,0.03)"/><ellipse cx="962" cy="1046" rx="7" ry="19" transform="rotate(-30 962 1046)" fill="rgba(150,170,210,0.03)"/><ellipse cx="706" cy="1002" rx="8" ry="21" transform="rotate(-26 706 1002)" fill="rgba(150,170,210,0.02)"/><ellipse cx="95" cy="1040" rx="4" ry="26" transform="rotate(-27 95 1040)" fill="rgba(150,170,210,0.02)"/><ellipse cx="428" cy="971" rx="7" ry="19" transform="rotate(-30 428 971)" fill="rgba(150,170,210,0.02)"/><ellipse cx="1439" cy="1007" rx="3" ry="22" transform="rotate(-35 1439 1007)" fill="rgba(150,170,210,0.03)"/><ellipse cx="1139" cy="1051" rx="7" ry="28" transform="rotate(-29 1139 1051)" fill="rgba(150,170,210,0.02)"/><ellipse cx="1170" cy="1017" rx="6" ry="25" transform="rotate(-20 1170 1017)" fill="rgba(150,170,210,0.02)"/><ellipse cx="102" cy="971" rx="6" ry="18" transform="rotate(-26 102 971)" fill="rgba(150,170,210,0.03)"/><ellipse cx="1651" cy="999" rx="6" ry="30" transform="rotate(-15 1651 999)" fill="rgba(150,170,210,0.01)"/><ellipse cx="1597" cy="993" rx="6" ry="35" transform="rotate(-22 1597 993)" fill="rgba(150,170,210,0.03)"/><ellipse cx="109" cy="1033" rx="4" ry="29" transform="rotate(-16 109 1033)" fill="rgba(150,170,210,0.02)"/><ellipse cx="1226" cy="964" rx="13" ry="33" transform="rotate(-35 1226 964)" fill="rgba(150,170,210,0.02)"/><ellipse cx="1415" cy="1001" rx="10" ry="40" transform="rotate(-34 1415 1001)" fill="rgba(150,170,210,0.03)"/><ellipse cx="1500" cy="1003" rx="11" ry="21" transform="rotate(-26 1500 1003)" fill="rgba(150,170,210,0.02)"/><ellipse cx="227" cy="992" rx="11" ry="12" transform="rotate(-18 227 992)" fill="rgba(150,170,210,0.01)"/><ellipse cx="1279" cy="1013" rx="4" ry="14" transform="rotate(-16 1279 1013)" fill="rgba(150,170,210,0.02)"/><ellipse cx="1076" cy="1048" rx="5" ry="22" transform="rotate(-18 1076 1048)" fill="rgba(150,170,210,0.02)"/><ellipse cx="237" cy="1043" rx="8" ry="11" transform="rotate(-27 237 1043)" fill="rgba(150,170,210,0.02)"/><ellipse cx="1295" cy="1048" rx="8" ry="31" transform="rotate(-19 1295 1048)" fill="rgba(150,170,210,0.02)"/><ellipse cx="202" cy="1031" rx="5" ry="28" transform="rotate(-28 202 1031)" fill="rgba(150,170,210,0.02)"/><ellipse cx="315" cy="995" rx="10" ry="26" transform="rotate(-24 315 995)" fill="rgba(150,170,210,0.02)"/><ellipse cx="1617" cy="995" rx="9" ry="24" transform="rotate(-28 1617 995)" fill="rgba(150,170,210,0.03)"/><ellipse cx="1339" cy="984" rx="6" ry="32" transform="rotate(-30 1339 984)" fill="rgba(150,170,210,0.02)"/><ellipse cx="123" cy="1039" rx="7" ry="31" transform="rotate(-23 123 1039)" fill="rgba(150,170,210,0.02)"/><ellipse cx="1074" cy="1053" rx="13" ry="24" transform="rotate(-30 1074 1053)" fill="rgba(150,170,210,0.02)"/><ellipse cx="1446" cy="972" rx="6" ry="35" transform="rotate(-21 1446 972)" fill="rgba(150,170,210,0.01)"/><ellipse cx="1091" cy="1013" rx="7" ry="15" transform="rotate(-20 1091 1013)" fill="rgba(150,170,210,0.03)"/><ellipse cx="1547" cy="971" rx="12" ry="17" transform="rotate(-24 1547 971)" fill="rgba(150,170,210,0.01)"/><ellipse cx="1171" cy="973" rx="11" ry="27" transform="rotate(-17 1171 973)" fill="rgba(150,170,210,0.03)"/><ellipse cx="1323" cy="996" rx="13" ry="32" transform="rotate(-18 1323 996)" fill="rgba(150,170,210,0.02)"/><ellipse cx="1396" cy="987" rx="6" ry="11" transform="rotate(-30 1396 987)" fill="rgba(150,170,210,0.02)"/><ellipse cx="563" cy="986" rx="4" ry="25" transform="rotate(-29 563 986)" fill="rgba(150,170,210,0.02)"/><ellipse cx="533" cy="1009" rx="13" ry="15" transform="rotate(-18 533 1009)" fill="rgba(150,170,210,0.03)"/><ellipse cx="1170" cy="1013" rx="11" ry="26" transform="rotate(-17 1170 1013)" fill="rgba(150,170,210,0.03)"/><ellipse cx="1488" cy="986" rx="4" ry="38" transform="rotate(-19 1488 986)" fill="rgba(150,170,210,0.02)"/><ellipse cx="448" cy="1004" rx="7" ry="32" transform="rotate(-25 448 1004)" fill="rgba(150,170,210,0.03)"/><ellipse cx="1087" cy="994" rx="6" ry="38" transform="rotate(-16 1087 994)" fill="rgba(150,170,210,0.01)"/><ellipse cx="1262" cy="969" rx="13" ry="13" transform="rotate(-33 1262 969)" fill="rgba(150,170,210,0.02)"/><ellipse cx="1899" cy="991" rx="13" ry="12" transform="rotate(-34 1899 991)" fill="rgba(150,170,210,0.03)"/><ellipse cx="57" cy="1015" rx="14" ry="31" transform="rotate(-19 57 1015)" fill="rgba(150,170,210,0.03)"/><ellipse cx="1001" cy="969" rx="9" ry="16" transform="rotate(-28 1001 969)" fill="rgba(150,170,210,0.02)"/><ellipse cx="958" cy="980" rx="11" ry="23" transform="rotate(-33 958 980)" fill="rgba(150,170,210,0.02)"/><ellipse cx="935" cy="1014" rx="14" ry="27" transform="rotate(-29 935 1014)" fill="rgba(150,170,210,0.01)"/><ellipse cx="644" cy="1027" rx="13" ry="39" transform="rotate(-16 644 1027)" fill="rgba(150,170,210,0.03)"/><ellipse cx="1649" cy="1049" rx="3" ry="25" transform="rotate(-21 1649 1049)" fill="rgba(150,170,210,0.02)"/><ellipse cx="1176" cy="1019" rx="13" ry="13" transform="rotate(-16 1176 1019)" fill="rgba(150,170,210,0.02)"/><ellipse cx="61" cy="972" rx="13" ry="39" transform="rotate(-34 61 972)" fill="rgba(150,170,210,0.01)"/><ellipse cx="1593" cy="1026" rx="9" ry="27" transform="rotate(-19 1593 1026)" fill="rgba(150,170,210,0.03)"/><ellipse cx="1" cy="968" rx="12" ry="39" transform="rotate(-27 1 968)" fill="rgba(150,170,210,0.03)"/><ellipse cx="644" cy="994" rx="3" ry="33" transform="rotate(-23 644 994)" fill="rgba(150,170,210,0.02)"/><ellipse cx="1010" cy="993" rx="10" ry="24" transform="rotate(-17 1010 993)" fill="rgba(150,170,210,0.02)"/><ellipse cx="337" cy="976" rx="6" ry="24" transform="rotate(-28 337 976)" fill="rgba(150,170,210,0.03)"/><ellipse cx="457" cy="1023" rx="6" ry="26" transform="rotate(-17 457 1023)" fill="rgba(150,170,210,0.02)"/><ellipse cx="354" cy="984" rx="6" ry="20" transform="rotate(-22 354 984)" fill="rgba(150,170,210,0.03)"/><ellipse cx="1517" cy="1012" rx="4" ry="33" transform="rotate(-31 1517 1012)" fill="rgba(150,170,210,0.02)"/><ellipse cx="796" cy="1054" rx="7" ry="21" transform="rotate(-15 796 1054)" fill="rgba(150,170,210,0.03)"/><ellipse cx="743" cy="975" rx="12" ry="33" transform="rotate(-19 743 975)" fill="rgba(150,170,210,0.02)"/><ellipse cx="729" cy="989" rx="10" ry="32" transform="rotate(-19 729 989)" fill="rgba(150,170,210,0.02)"/><ellipse cx="27" cy="1008" rx="7" ry="12" transform="rotate(-32 27 1008)" fill="rgba(150,170,210,0.03)"/><ellipse cx="395" cy="1044" rx="14" ry="38" transform="rotate(-16 395 1044)" fill="rgba(150,170,210,0.02)"/><ellipse cx="272" cy="1028" rx="13" ry="16" transform="rotate(-21 272 1028)" fill="rgba(150,170,210,0.01)"/><ellipse cx="1694" cy="1030" rx="13" ry="24" transform="rotate(-33 1694 1030)" fill="rgba(150,170,210,0.02)"/><ellipse cx="524" cy="1049" rx="4" ry="16" transform="rotate(-34 524 1049)" fill="rgba(150,170,210,0.02)"/><ellipse cx="589" cy="979" rx="4" ry="26" transform="rotate(-24 589 979)" fill="rgba(150,170,210,0.02)"/><ellipse cx="1464" cy="1011" rx="13" ry="12" transform="rotate(-33 1464 1011)" fill="rgba(150,170,210,0.02)"/><ellipse cx="594" cy="1033" rx="13" ry="25" transform="rotate(-28 594 1033)" fill="rgba(150,170,210,0.01)"/><ellipse cx="1091" cy="989" rx="12" ry="39" transform="rotate(-23 1091 989)" fill="rgba(150,170,210,0.02)"/><ellipse cx="1624" cy="1005" rx="5" ry="38" transform="rotate(-35 1624 1005)" fill="rgba(150,170,210,0.03)"/><ellipse cx="1464" cy="999" rx="4" ry="15" transform="rotate(-20 1464 999)" fill="rgba(150,170,210,0.01)"/><ellipse cx="406" cy="964" rx="5" ry="34" transform="rotate(-22 406 964)" fill="rgba(150,170,210,0.02)"/><ellipse cx="893" cy="979" rx="3" ry="19" transform="rotate(-30 893 979)" fill="rgba(150,170,210,0.01)"/><ellipse cx="1188" cy="996" rx="8" ry="29" transform="rotate(-28 1188 996)" fill="rgba(150,170,210,0.02)"/></g><path d="M546 1055 L600 1012 L660 985 L723 964 L870 964 L930 1010 L962 1055 Z" fill="rgba(30,24,30,0.92)" filter="url(#b2)"/><path d="M948 1046 L972 1016 L1028 974 L1036 982 L992 1030 L964 1052 Z" fill="rgba(150,160,195,0.22)" filter="url(#b2)"/></svg><div class="a" style="left:0px;top:0px;width:1920px;height:27px;background:#2b333b;"></div><svg class="a" style="left:5px;top:3px;" width="20" height="22" viewBox="0 0 20 22"><path d="M15 3 C8 2 4 8 6 12 C8 15 13 12 14 8 C14 14 12 19 7 21 M5 14 L16 11" stroke="#1eb4c8" stroke-width="2.2" fill="none" stroke-linecap="round"/></svg><div class="t" style="left:31.0px;top:7.00px;font-size:13px;font-family:'Liberation Sans',sans-serif;color:#d8d8d6;letter-spacing:0.173px;">Applications</div><div class="t" style="left:112.0px;top:7.00px;font-size:13px;font-family:'Liberation Sans',sans-serif;color:#d8d8d6;letter-spacing:-0.604px;">Places</div><div class="t" style="left:157.0px;top:7.00px;font-size:13px;font-family:'Liberation Sans',sans-serif;color:#d8d8d6;letter-spacing:-0.069px;">System</div><div class="a" style="left:274px;top:6px;width:16px;height:16px;border:1.5px solid #e8e8e8;border-radius:3px"></div><svg class="a" style="left:277px;top:9px;" width="10" height="10" viewBox="0 0 10 10"><path d="M1 1 L4 4 L1 7 M5 8 L9 8" stroke="#e8e8e8" stroke-width="1.3" fill="none"/></svg><div class="a" style="left:317px;top:4px;width:20px;height:20px;background:#1d4a68;"></div><svg class="a" style="left:317px;top:4px;" width="20" height="20" viewBox="0 0 20 20"><path d="M1 12 L7 12 L9 8 L11 15 L13 11 L19 11" stroke="#8fb9cf" stroke-width="1" fill="none"/></svg><div class="a" style="left:1741px;top:0px;width:1px;height:27px;background:#5a6068;"></div><div class="a" style="left:1746px;top:6px;width:4px;height:4px;background:#f0f0f0;"></div><div class="a" style="left:1746px;top:12px;width:4px;height:4px;background:#f0f0f0;"></div><div class="a" style="left:1746px;top:18px;width:4px;height:4px;background:#f0f0f0;"></div><svg class="a" style="left:1757px;top:6px;" width="18" height="16" viewBox="0 0 18 16"><path d="M1 5 L5 5 L9 1 L9 15 L5 11 L1 11 Z" fill="#dfe3e6"/><path d="M11 5 Q13 8 11 11 M13 3 Q16.5 8 13 13" stroke="#dfe3e6" stroke-width="1.3" fill="none"/></svg><svg class="a" style="left:1787px;top:6px;" width="18" height="15" viewBox="0 0 18 15"><path d="M6 2 L14 2 L14 0 L17 4 L14 8 L14 6 L6 6 Z M12 9 L4 9 L4 7 L1 11 L4 15 L4 13 L12 13 Z" stroke="#e6e6e6" stroke-width="1.1" fill="none"/></svg><div class="t" style="left:1815.0px;top:7.00px;font-size:13px;font-family:'Liberation Sans',sans-serif;color:#d8d8d6;letter-spacing:-0.209px;">Sat Mar 14, 18:25</div><div class="a" style="left:64px;top:54px;width:28px;height:30px;background:#4a90e2;border:2px solid #283444"></div><div class="a" style="left:78px;top:84px;width:2px;height:8px;background:#e8e8e8;"></div><div class="t" style="left:57.0px;top:101.00px;font-size:13px;font-family:'Liberation Sans',sans-serif;font-weight:bold;color:#fff;text-shadow:1px 1px 1px #000">Computer</div><div class="a" style="left:64px;top:135px;width:26px;height:9px;background:#f4f4f4;border-radius:2px 2px 0 0"></div><div class="a" style="left:64px;top:142px;width:26px;height:31px;background:#4f8fdc;border-radius:2px"></div><div class="t" style="left:39.0px;top:182.00px;font-size:13px;font-family:'Liberation Sans',sans-serif;font-weight:bold;color:#fff;text-shadow:1px 1px 1px #000">sternas</div><svg class="a" style="left:68px;top:214px;" width="24" height="41" viewBox="0 0 24 41"><path d="M2 0 L24 0 L24 8 L3 8 Z" fill="#3b4047"/><path d="M3 8 L24 8 L24 40 L7 40 Z" fill="#4b5159"/><path d="M13 18 L17 14 L19 18 M12 26 L10 31 L14 31 M20 24 L22 29 L18 31" stroke="#e8e8e8" stroke-width="2.2" fill="none"/></svg><div class="t" style="left:71.0px;top:262.00px;font-size:13px;font-family:'Liberation Sans',sans-serif;font-weight:bold;color:#fff;text-shadow:1px 1px 1px #000">Trash</div><svg class="a" style="left:62px;top:312px;" width="30" height="40" viewBox="0 0 30 40"><path d="M22 2 C12 6 8 14 10 24 C11 20 14 14 22 10 Z" fill="#1b2232"/><path d="M4 30 C10 38 20 38 28 34 C22 34 14 32 10 26 Z" fill="#1b2232"/><path d="M28 16 C24 22 20 26 12 28 C18 30 26 26 30 20 Z" fill="#1b2232"/><circle cx="19" cy="20" r="5" fill="#1b2232"/></svg><div class="a" style="left:45px;top:358px;width:50px;height:19px;background:#3d7fe0;border-radius:3px"></div><div class="t" style="left:50.0px;top:362.00px;font-size:13px;font-family:'Liberation Sans',sans-serif;font-weight:bold;color:#fff;">CodeTyphon</div><svg class="a" style="left:64px;top:408px;" width="28" height="36" viewBox="0 0 28 36"><ellipse cx="20" cy="6" rx="12" ry="5" fill="#5aa0e6"/><path d="M8 6 Q10 20 16 28 L22 28 Q26 18 32 6" fill="#3a7fd0"/><path d="M9 12 Q20 15 31 12 M11 18 Q20 21 29 18 M14 23 Q20 25 27 23" stroke="#a8d4ff" stroke-width="1.2" fill="none"/></svg><div class="t" style="left:58.0px;top:461.00px;font-size:13px;font-family:'Liberation Sans',sans-serif;font-weight:bold;color:#fff;text-shadow:1px 1px 1px #000">Typhon</div><div class="a" style="left:0px;top:1055px;width:1920px;height:25px;background:#2a2d31;"></div><div class="a" style="left:4px;top:1061px;width:15px;height:13px;border:1.5px solid #e0e0e0;border-radius:1px;border-top-width:3px"></div><div class="a" style="left:24px;top:1056px;width:1px;height:24px;background:#1e2023;"></div><div class="a" style="left:29px;top:1061px;width:4px;height:4px;background:#f0f0f0;"></div><div class="a" style="left:29px;top:1066px;width:4px;height:4px;background:#f0f0f0;"></div><div class="a" style="left:29px;top:1071px;width:4px;height:4px;background:#f0f0f0;"></div><svg class="a" style="left:39px;top:1059px;" width="17" height="17" viewBox="0 0 17 17"><path d="M1 2 Q8.5 -1 16 2 L13 6 Q11 9 8 11 Q9 13 7 16 Q6 12 4 9 Q3 6 1 2 Z" fill="#3a8ee0"/><path d="M2 3 Q8.5 5 15 3 M4 6.5 Q9 8 13 6.5 M5.5 9.5 Q8 10.5 10.5 9.5" stroke="#d8ecff" stroke-width="1" fill="none"/></svg><div class="t" style="left:62.0px;top:1061.00px;font-size:13px;font-family:'Liberation Sans',sans-serif;color:#dcdcdc;letter-spacing:-0.135px;">Typhon64 IDE v9.0 - ...</div><svg class="a" style="left:205px;top:1059px;" width="17" height="17" viewBox="0 0 17 17"><path d="M1 2 Q8.5 -1 16 2 L13 6 Q11 9 8 11 Q9 13 7 16 Q6 12 4 9 Q3 6 1 2 Z" fill="#3a8ee0"/><path d="M2 3 Q8.5 5 15 3 M4 6.5 Q9 8 13 6.5 M5.5 9.5 Q8 10.5 10.5 9.5" stroke="#d8ecff" stroke-width="1" fill="none"/></svg><div class="t" style="left:228.0px;top:1061.00px;font-size:13px;font-family:'Liberation Sans',sans-serif;color:#dcdcdc;letter-spacing:-0.122px;">CodeOcean Examples</div><div class="a" style="left:366px;top:1056px;width:166px;height:24px;background:#3b3e43;"></div><div class="a" style="left:371px;top:1061px;width:14px;height:13px;background:#e6e6e6;border-top:3px solid #8a96a6"></div><div class="t" style="left:394.0px;top:1061.00px;font-size:13px;font-family:'Liberation Sans',sans-serif;color:#f0f0f0;letter-spacing:0.156px;">Edits Extrahint</div><div class="a" style="left:1750px;top:1056px;width:41px;height:24px;background:#4285e8;"></div><div class="a" style="left:1762px;top:1061px;width:16px;height:3px;background:#1d3b66;"></div><div class="a" style="left:1762px;top:1066px;width:16px;height:5px;background:#a0c0f0;"></div><div class="a" style="left:1791px;top:1056px;width:43px;height:24px;background:#1f2124;"></div><div class="a" style="left:1834px;top:1056px;width:1px;height:24px;background:#2c2f33;"></div><div class="a" style="left:1835px;top:1056px;width:42px;height:24px;background:#1f2124;"></div><div class="a" style="left:1877px;top:1056px;width:1px;height:24px;background:#2c2f33;"></div><div class="a" style="left:1878px;top:1056px;width:42px;height:24px;background:#1f2124;"></div><div class="a" style="left:86px;top:33px;width:1288px;height:933px;background:#323337;border:1px solid #232427;border-radius:3px 3px 0 0;box-shadow:0 0 4px rgba(0,0,0,.5)"></div><div class="a" style="left:87px;top:34px;width:1285px;height:57px;background:#353639;"></div><div class="a" style="left:95px;top:42px;width:14px;height:14px;border-radius:50%;background:#3d3e42;"></div><div class="t" style="left:257.0px;top:46.00px;font-size:13px;font-family:'Liberation Sans',sans-serif;font-weight:bold;color:#b2b2b2;letter-spacing:0.217px;">Typhon64 IDE v9.0 - edits_extrahint (/usr/local/codetyphon/CodeOcean/pl_FpGUI/samples/edits_extrahint)  (debugging ...) for x86_64-freebsd-NoGUI</div><div class="a" style="left:1294px;top:42px;width:14px;height:14px;border-radius:50%;background:#9a9a9a;"></div><div class="a" style="left:1321px;top:42px;width:14px;height:14px;border-radius:50%;background:#9a9a9a;"></div><div class="a" style="left:1348px;top:42px;width:14px;height:14px;border-radius:50%;background:#9a9a9a;"></div><div class="t" style="left:95.0px;top:71.50px;font-size:13px;font-family:'Liberation Sans',sans-serif;font-weight:bold;color:#e4e4e4;letter-spacing:0.035px;">File</div><div class="t" style="left:132.0px;top:71.50px;font-size:13px;font-family:'Liberation Sans',sans-serif;font-weight:bold;color:#e4e4e4;letter-spacing:-0.185px;">Edit</div><div class="t" style="left:171.0px;top:71.50px;font-size:13px;font-family:'Liberation Sans',sans-serif;font-weight:bold;color:#e4e4e4;letter-spacing:0.028px;">Search</div><div class="t" style="left:229.0px;top:71.50px;font-size:13px;font-family:'Liberation Sans',sans-serif;font-weight:bold;color:#e4e4e4;letter-spacing:0.203px;">View</div><div class="t" style="left:274.0px;top:71.50px;font-size:13px;font-family:'Liberation Sans',sans-serif;font-weight:bold;color:#e4e4e4;letter-spacing:-0.115px;">Source</div><div class="t" style="left:332.0px;top:71.50px;font-size:13px;font-family:'Liberation Sans',sans-serif;font-weight:bold;color:#e4e4e4;letter-spacing:0.509px;">MultiProject</div><div class="t" style="left:427.0px;top:71.50px;font-size:13px;font-family:'Liberation Sans',sans-serif;font-weight:bold;color:#e4e4e4;letter-spacing:0.321px;">Project</div><div class="t" style="left:488.0px;top:71.50px;font-size:13px;font-family:'Liberation Sans',sans-serif;font-weight:bold;color:#e4e4e4;letter-spacing:-0.635px;">Run</div><div class="t" style="left:526.0px;top:71.50px;font-size:13px;font-family:'Liberation Sans',sans-serif;font-weight:bold;color:#e4e4e4;letter-spacing:0.123px;">Package</div><div class="t" style="left:594.0px;top:71.50px;font-size:13px;font-family:'Liberation Sans',sans-serif;font-weight:bold;color:#e4e4e4;letter-spacing:0.031px;">Settings</div><div class="t" style="left:660.0px;top:71.50px;font-size:13px;font-family:'Liberation Sans',sans-serif;font-weight:bold;color:#e4e4e4;letter-spacing:-0.300px;">Tools</div><div class="t" style="left:706.8px;top:71.50px;font-size:13px;font-family:'Liberation Sans',sans-serif;font-weight:bold;color:#e4e4e4;letter-spacing:0.209px;">Window</div><div class="t" style="left:772.0px;top:71.50px;font-size:13px;font-family:'Liberation Sans',sans-serif;font-weight:bold;color:#e4e4e4;letter-spacing:0.276px;">Help</div><div class="a" style="left:87px;top:91px;width:1285px;height:29px;background:#2d2e32;"></div><div class="a" style="left:89px;top:93px;width:1px;height:24px;background:#222326;"></div><div class="a" style="left:92px;top:93px;width:1px;height:24px;background:#222326;"></div><div class="a" style="left:165px;top:95px;width:1px;height:20px;background:#3c3d41;"></div><div class="a" style="left:248px;top:95px;width:1px;height:20px;background:#3c3d41;"></div><div class="a" style="left:431px;top:95px;width:1px;height:20px;background:#3c3d41;"></div><div class="a" style="left:536px;top:95px;width:1px;height:20px;background:#3c3d41;"></div><div class="a" style="left:676px;top:95px;width:1px;height:20px;background:#3c3d41;"></div><div class="a" style="left:724px;top:95px;width:1px;height:20px;background:#3c3d41;"></div><div class="a" style="left:807px;top:95px;width:1px;height:20px;background:#3c3d41;"></div><div class="a" style="left:835px;top:95px;width:1px;height:20px;background:#3c3d41;"></div><div class="a" style="left:895px;top:95px;width:1px;height:20px;background:#3c3d41;"></div><svg class="a" style="left:103px;top:98px;" width="18" height="18" viewBox="0 0 18 18"><path d="M1 1 L8 1 L12 5 L12 15 L1 15 Z" fill="#f4f6fa" stroke="#7a8aa8" stroke-width="0.8"/></svg><svg class="a" style="left:124px;top:98px;" width="18" height="18" viewBox="0 0 18 18"><path d="M1 1 L8 1 L12 5 L12 15 L1 15 Z" fill="#fffbe6" stroke="#7a8aa8" stroke-width="0.8"/><rect x="3" y="4.0" width="7" height="1.3" fill="#333"/><rect x="3" y="6.5" width="7" height="1.3" fill="#d22"/><rect x="3" y="9.0" width="7" height="1.3" fill="#2aa"/><rect x="3" y="11.5" width="7" height="1.3" fill="#333"/><path d="M8 11 L16 11 M12 7 L12 15" stroke="#19c6d8" stroke-width="2.4"/></svg><svg class="a" style="left:146px;top:98px;" width="18" height="18" viewBox="0 0 18 18"><rect x="1" y="1" width="13" height="12" fill="#f4f4f4" stroke="#333" stroke-width="0.6"/><rect x="1" y="1" width="13" height="3" fill="#1a2a8a"/><path d="M8 11 L16 11 M12 7 L12 15" stroke="#19c6d8" stroke-width="2.4"/></svg><svg class="a" style="left:171px;top:98px;" width="18" height="18" viewBox="0 0 18 18"><defs><radialGradient id="g666" cx="35%" cy="30%"><stop offset="0" stop-color="#8fc4f5"/><stop offset="1" stop-color="#1f5fb8"/></radialGradient></defs><circle cx="6" cy="6" r="6" fill="url(#g666)"/><path d="M4 3 Q8 2 7 7" stroke="#dff" stroke-width="0.8" fill="none"/><path d="M7 6 L11 6 L15 10 L15 16 L7 16 Z" fill="#f4f6fa" stroke="#7a8aa8" stroke-width="0.8"/></svg><svg class="a" style="left:194px;top:98px;" width="18" height="18" viewBox="0 0 18 18"><defs><radialGradient id="g1066" cx="35%" cy="30%"><stop offset="0" stop-color="#8fc4f5"/><stop offset="1" stop-color="#1f5fb8"/></radialGradient></defs><circle cx="10" cy="6" r="6" fill="url(#g1066)"/><path d="M8 3 Q12 2 11 7" stroke="#dff" stroke-width="0.8" fill="none"/><path d="M5 7 L10 12 L7 12 L7 15 L3 15 L3 12 L0 12 Z" fill="#22dd44" stroke="#0a6a1a" stroke-width="0.5"/><rect x="-1" y="15" width="12" height="1" fill="#2a70d0"/></svg><svg class="a" style="left:227px;top:98px;" width="18" height="18" viewBox="0 0 18 18"><defs><radialGradient id="g776" cx="35%" cy="30%"><stop offset="0" stop-color="#8fc4f5"/><stop offset="1" stop-color="#1f5fb8"/></radialGradient></defs><circle cx="7" cy="7" r="6" fill="url(#g776)"/><path d="M5 4 Q9 3 8 8" stroke="#dff" stroke-width="0.8" fill="none"/><circle cx="10" cy="10" r="3" fill="#cfe6ff" stroke="#556" stroke-width="1.2"/><path d="M12.1 12.1 L16 16" stroke="#888" stroke-width="2"/></svg><svg class="a" style="left:254px;top:98px;" width="18" height="18" viewBox="0 0 18 18"><defs><radialGradient id="y766" cx="35%" cy="30%"><stop offset="0" stop-color="#ffe98a"/><stop offset="1" stop-color="#d8a20a"/></radialGradient></defs><circle cx="7" cy="6" r="6" fill="url(#y766)" stroke="#9a7000" stroke-width="0.5"/><path d="M4 4 L9 9 M9 3 L6 7" stroke="#b08000" stroke-width="0.8"/><path d="M8 6 L12 6 L16 10 L16 16 L8 16 Z" fill="#f4f6fa" stroke="#7a8aa8" stroke-width="0.8"/></svg><svg class="a" style="left:278px;top:98px;" width="18" height="18" viewBox="0 0 18 18"><defs><radialGradient id="y1066" cx="35%" cy="30%"><stop offset="0" stop-color="#ffe98a"/><stop offset="1" stop-color="#d8a20a"/></radialGradient></defs><circle cx="10" cy="6" r="6" fill="url(#y1066)" stroke="#9a7000" stroke-width="0.5"/><path d="M7 4 L12 9 M12 3 L9 7" stroke="#b08000" stroke-width="0.8"/><path d="M5 7 L10 12 L7 12 L7 15 L3 15 L3 12 L0 12 Z" fill="#22dd44" stroke="#0a6a1a" stroke-width="0.5"/><rect x="-1" y="15" width="12" height="1" fill="#2a70d0"/></svg><svg class="a" style="left:311px;top:98px;" width="18" height="18" viewBox="0 0 18 18"><defs><radialGradient id="y666" cx="35%" cy="30%"><stop offset="0" stop-color="#ddd"/><stop offset="1" stop-color="#888"/></radialGradient></defs><circle cx="6" cy="6" r="6" fill="url(#y666)" stroke="#9a7000" stroke-width="0.5"/><path d="M3 4 L8 9 M8 3 L5 7" stroke="#b08000" stroke-width="0.8"/><rect x="5" y="5" width="11" height="11" rx="1" fill="#b8bcc4" stroke="#666" stroke-width="0.6"/><rect x="7" y="5" width="7" height="4" fill="#eee"/><rect x="8" y="12" width="5" height="4" fill="#888"/></svg><svg class="a" style="left:333px;top:98px;" width="18" height="18" viewBox="0 0 18 18"><defs><radialGradient id="y766" cx="35%" cy="30%"><stop offset="0" stop-color="#ffe98a"/><stop offset="1" stop-color="#d8a20a"/></radialGradient></defs><circle cx="7" cy="6" r="6" fill="url(#y766)" stroke="#9a7000" stroke-width="0.5"/><path d="M4 4 L9 9 M9 3 L6 7" stroke="#b08000" stroke-width="0.8"/><path d="M10 15 L15 10 L12 10 L12 7 L8 7 L8 10 L5 10 Z" fill="#22cc33" stroke="#0a6a1a" stroke-width="0.5"/></svg><svg class="a" style="left:354px;top:98px;" width="18" height="18" viewBox="0 0 18 18"><defs><radialGradient id="y776" cx="35%" cy="30%"><stop offset="0" stop-color="#ffe98a"/><stop offset="1" stop-color="#d8a20a"/></radialGradient></defs><circle cx="7" cy="7" r="6" fill="url(#y776)" stroke="#9a7000" stroke-width="0.5"/><path d="M4 5 L9 10 M9 4 L6 8" stroke="#b08000" stroke-width="0.8"/><circle cx="10" cy="10" r="3" fill="#cfe6ff" stroke="#556" stroke-width="1.2"/><path d="M12.1 12.1 L16 16" stroke="#888" stroke-width="2"/></svg><svg class="a" style="left:376px;top:98px;" width="18" height="18" viewBox="0 0 18 18"><defs><radialGradient id="y786" cx="35%" cy="30%"><stop offset="0" stop-color="#ffe98a"/><stop offset="1" stop-color="#d8a20a"/></radialGradient></defs><circle cx="7" cy="8" r="6" fill="url(#y786)" stroke="#9a7000" stroke-width="0.5"/><path d="M4 6 L9 11 M9 5 L6 9" stroke="#b08000" stroke-width="0.8"/><path d="M9 2 L15 9" stroke="#e22" stroke-width="2.5"/><circle cx="10" cy="3" r="2.5" fill="#ccc"/></svg><svg class="a" style="left:398px;top:98px;" width="18" height="18" viewBox="0 0 18 18"><defs><radialGradient id="y766" cx="35%" cy="30%"><stop offset="0" stop-color="#ffe98a"/><stop offset="1" stop-color="#d8a20a"/></radialGradient></defs><circle cx="7" cy="6" r="6" fill="url(#y766)" stroke="#9a7000" stroke-width="0.5"/><path d="M4 4 L9 9 M9 3 L6 7" stroke="#b08000" stroke-width="0.8"/><circle cx="11" cy="11" r="3.5" fill="#4c4" stroke="#262" stroke-width="0.8"/><circle cx="11" cy="11" r="1.3" fill="#dfd"/></svg><svg class="a" style="left:438px;top:98px;" width="18" height="18" viewBox="0 0 18 18"><path d="M5 1 L11 1 L15 5 L15 14 L5 14 Z" fill="#fffbe6" stroke="#7a8aa8" stroke-width="0.8"/><rect x="7" y="4.0" width="5" height="1.3" fill="#333"/><rect x="7" y="6.5" width="5" height="1.3" fill="#d22"/><rect x="7" y="9.0" width="5" height="1.3" fill="#2aa"/><path d="M5 7 L10 12 L7 12 L7 15 L3 15 L3 12 L0 12 Z" fill="#22dd44" stroke="#0a6a1a" stroke-width="0.5"/><rect x="-1" y="15" width="12" height="1" fill="#2a70d0"/></svg><svg class="a" style="left:472px;top:98px;" width="18" height="18" viewBox="0 0 18 18"><rect x="1" y="1" width="14" height="14" rx="1" fill="#c8ccd2" stroke="#666" stroke-width="0.6"/><rect x="3" y="1" width="10" height="4" fill="#eee"/><rect x="4" y="8" width="8" height="7" fill="#888"/></svg><svg class="a" style="left:494px;top:98px;" width="18" height="18" viewBox="0 0 18 18"><path d="M1 1 L8 1 L12 5 L12 14 L1 14 Z" fill="#fffbe6" stroke="#7a8aa8" stroke-width="0.8"/><rect x="3" y="4.0" width="6" height="1.3" fill="#333"/><rect x="3" y="6.5" width="6" height="1.3" fill="#d22"/><rect x="3" y="9.0" width="6" height="1.3" fill="#2aa"/><path d="M11 15 L16 10 L13 10 L13 7 L9 7 L9 10 L6 10 Z" fill="#22cc33" stroke="#0a6a1a" stroke-width="0.5"/></svg><svg class="a" style="left:517px;top:98px;" width="18" height="18" viewBox="0 0 18 18"><path d="M1 1 L6 1 L10 5 L10 12 L1 12 Z" fill="#bbb" stroke="#7a8aa8" stroke-width="0.8"/><path d="M4 3 L9 3 L13 7 L13 14 L4 14 Z" fill="#ccc" stroke="#7a8aa8" stroke-width="0.8"/><rect x="7" y="7" width="8" height="8" rx="1" fill="#b8bcc4" stroke="#666" stroke-width="0.6"/><rect x="9" y="7" width="4" height="4" fill="#eee"/><rect x="10" y="14" width="2" height="1" fill="#888"/></svg><svg class="a" style="left:544px;top:98px;" width="18" height="18" viewBox="0 0 18 18"><path d="M1 1 L9 1 L13 5 L13 15 L1 15 Z" fill="#fffbe6" stroke="#7a8aa8" stroke-width="0.8"/><rect x="3" y="4.0" width="7" height="1.3" fill="#333"/><rect x="3" y="6.5" width="7" height="1.3" fill="#d22"/><rect x="3" y="9.0" width="7" height="1.3" fill="#2aa"/><rect x="3" y="11.5" width="7" height="1.3" fill="#333"/><path d="M8 12 L15 3" stroke="#f0b020" stroke-width="2.5"/><path d="M15 3 L16 2" stroke="#e22" stroke-width="2.5"/></svg><svg class="a" style="left:565px;top:98px;" width="18" height="18" viewBox="0 0 18 18"><circle cx="5" cy="5" r="3" fill="#e22"/><circle cx="10" cy="4" r="3" fill="#2b4"/><circle cx="7" cy="9" r="3" fill="#27d"/><circle cx="9" cy="9" r="3.5" fill="#cfe6ff" stroke="#556" stroke-width="1.2"/><path d="M11.45 11.45 L15.5 15.5" stroke="#888" stroke-width="2"/></svg><svg class="a" style="left:588px;top:98px;" width="18" height="18" viewBox="0 0 18 18"><rect x="7" y="1" width="6" height="6" fill="#f0c020"/><rect x="9" y="4" width="6" height="6" fill="#3a8"/><path d="M3 6 L3 14 L9 14 M3 10 L9 10" stroke="#27d" stroke-width="1.5" fill="none"/><rect x="1" y="8" width="4" height="3" fill="#27d"/></svg><svg class="a" style="left:610px;top:98px;" width="18" height="18" viewBox="0 0 18 18"><path d="M1 1 L7 1 L11 5 L11 13 L1 13 Z" fill="#f4f4f4" stroke="#7a8aa8" stroke-width="0.8"/><path d="M5 4 L11 4 L15 8 L15 16 L5 16 Z" fill="#fff" stroke="#7a8aa8" stroke-width="0.8"/><rect x="7" y="7.0" width="6" height="1.3" fill="#2aa"/><rect x="7" y="9.5" width="6" height="1.3" fill="#d22"/><rect x="7" y="12.0" width="6" height="1.3" fill="#2aa"/></svg><svg class="a" style="left:631px;top:98px;" width="18" height="18" viewBox="0 0 18 18"><rect x="1" y="1" width="12" height="10" fill="#f4f4f4" stroke="#333" stroke-width="0.6"/><rect x="1" y="1" width="12" height="3" fill="#1a2a8a"/><rect x="4" y="5" width="12" height="10" fill="#f4f4f4" stroke="#333" stroke-width="0.6"/><rect x="4" y="5" width="12" height="3" fill="#1a2a8a"/></svg><svg class="a" style="left:652px;top:98px;" width="18" height="18" viewBox="0 0 18 18"><rect x="1" y="1" width="7" height="6" fill="#eee"/><rect x="8" y="9" width="7" height="6" fill="#eee"/><path d="M11 2 L14 5 M4 14 L1 11" stroke="#888" stroke-width="1.5"/></svg><svg class="a" style="left:681px;top:98px;" width="18" height="18" viewBox="0 0 18 18"><rect x="2" y="3" width="5" height="12" rx="2" fill="#cfd6e6"/><rect x="9" y="3" width="5" height="12" rx="2" fill="#cfd6e6"/><rect x="3" y="1" width="3" height="3" fill="#aab"/><rect x="10" y="1" width="3" height="3" fill="#aab"/></svg><svg class="a" style="left:702px;top:98px;" width="18" height="18" viewBox="0 0 18 18"><rect x="2" y="3" width="5" height="12" rx="2" fill="#cfd6e6"/><rect x="9" y="3" width="5" height="12" rx="2" fill="#cfd6e6"/><text x="9" y="15" font-size="8" font-weight="bold" fill="#2a2" font-family="Liberation Sans">B</text></svg><svg class="a" style="left:728px;top:98px;" width="18" height="18" viewBox="0 0 18 18"><rect x="5" y="2" width="10" height="9" rx="2" fill="#8fb6e8" stroke="#4a6aa8" stroke-width="0.6"/><path d="M5 7 L10 12 L7 12 L7 15 L3 15 L3 12 L0 12 Z" fill="#22dd44" stroke="#0a6a1a" stroke-width="0.5"/><rect x="-1" y="15" width="12" height="1" fill="#2a70d0"/></svg><svg class="a" style="left:762px;top:98px;" width="18" height="18" viewBox="0 0 18 18"><rect x="5" y="2" width="10" height="7" rx="2" fill="#8fb6e8"/><rect x="8" y="8" width="8" height="7" fill="#f0e08a"/><path d="M5 7 L10 12 L7 12 L7 15 L3 15 L3 12 L0 12 Z" fill="#22dd44" stroke="#0a6a1a" stroke-width="0.5"/><rect x="-1" y="15" width="12" height="1" fill="#2a70d0"/></svg><svg class="a" style="left:786px;top:98px;" width="18" height="18" viewBox="0 0 18 18"><circle cx="5" cy="3" r="2.5" fill="#8fb6e8"/><circle cx="3" cy="12" r="1.5" fill="#5af"/><circle cx="8" cy="10" r="1.5" fill="#5af"/><circle cx="14" cy="13" r="1.5" fill="#5af"/><circle cx="12" cy="7" r="1.5" fill="#5af"/><path d="M3 12 L8 10 L14 13 M8 10 L12 7" stroke="#5af" stroke-width="0.8"/></svg><svg class="a" style="left:811px;top:98px;" width="18" height="18" viewBox="0 0 18 18"><path d="M1 4 Q5 1 9 4 Q13 1 17 4 L17 14 Q13 11 9 14 Q5 11 1 14 Z" fill="#2a5fb0"/></svg><svg class="a" style="left:840px;top:98px;" width="18" height="18" viewBox="0 0 18 18"><path d="M2 2 L14 14 M14 2 L2 14" stroke="#e0e0e0" stroke-width="1.6"/><path d="M11 1 L15 5" stroke="#f0b020" stroke-width="2"/></svg><svg class="a" style="left:861px;top:98px;" width="18" height="18" viewBox="0 0 18 18"><rect x="1" y="2" width="16" height="10" fill="#bcd4ee"/><rect x="6" y="13" width="6" height="1" fill="#888"/></svg><svg class="a" style="left:900px;top:98px;" width="18" height="18" viewBox="0 0 18 18"><circle cx="8" cy="8" r="6" fill="none" stroke="#9a4ae0" stroke-width="3" stroke-dasharray="2.4 1.2"/><circle cx="8" cy="8" r="3.5" fill="none" stroke="#a860f0" stroke-width="1.5"/></svg><svg class="a" style="left:922px;top:98px;" width="18" height="18" viewBox="0 0 18 18"><circle cx="6" cy="9" r="4.5" fill="none" stroke="#8a3ad0" stroke-width="2.5"/><circle cx="11" cy="12" r="3" fill="none" stroke="#8a3ad0" stroke-width="2"/><path d="M6 1 L10 1 L14 5 L14 10 L6 10 Z" fill="#fff" stroke="#7a8aa8" stroke-width="0.8"/><rect x="8" y="3.0" width="4" height="1.3" fill="#d22"/><rect x="8" y="5.5" width="4" height="1.3" fill="#d22"/></svg><svg class="a" style="left:944px;top:98px;" width="18" height="18" viewBox="0 0 18 18"><circle cx="6" cy="6" r="4.5" fill="none" stroke="#8a3ad0" stroke-width="2.5"/><circle cx="12" cy="12" r="3.5" fill="none" stroke="#8a3ad0" stroke-width="2.2"/></svg><svg class="a" style="left:967px;top:98px;" width="18" height="18" viewBox="0 0 18 18"><rect x="1" y="2" width="1.5" height="12" fill="#b060f0"/><rect x="4" y="2" width="1.5" height="12" fill="#b060f0"/><path d="M7 2 L16 8 L7 14 Z" fill="#b060f0"/></svg><svg class="a" style="left:990px;top:98px;" width="18" height="18" viewBox="0 0 18 18"><rect x="1" y="2" width="1.2" height="10" fill="#ccc"/><rect x="3" y="2" width="1.2" height="10" fill="#ccc"/><path d="M6 3 L15 9 L6 15 Z" fill="#777"/><circle cx="5" cy="12" r="2.5" fill="#333"/></svg><svg class="a" style="left:1023px;top:98px;" width="18" height="18" viewBox="0 0 18 18"><rect x="1" y="2" width="4.5" height="13" rx="1" fill="#e0406a"/><rect x="9" y="2" width="4.5" height="13" rx="1" fill="#e0406a"/></svg><svg class="a" style="left:1044px;top:98px;" width="18" height="18" viewBox="0 0 18 18"><rect x="1" y="2" width="12" height="12" fill="#f00"/></svg><svg class="a" style="left:1068px;top:98px;" width="18" height="18" viewBox="0 0 18 18"><path d="M3 13 L7 8 L11 13 L7 15 Z" fill="#aaa"/><circle cx="7" cy="3" r="1" fill="#999"/></svg><svg class="a" style="left:1090px;top:98px;" width="18" height="18" viewBox="0 0 18 18"><path d="M3 13 L7 8 L11 13 L7 15 Z" fill="#aaa"/><path d="M4 4 Q9 0 14 4" stroke="#888" stroke-width="0.8" fill="none" stroke-dasharray="1 1"/></svg><svg class="a" style="left:1113px;top:98px;" width="18" height="18" viewBox="0 0 18 18"><path d="M2 13 L6 8 L10 13 L6 15 Z" fill="#aaa"/><path d="M8 6 L13 1" stroke="#888" stroke-width="0.8" stroke-dasharray="1 1"/></svg><svg class="a" style="left:214px;top:103px;" width="8" height="5" viewBox="0 0 8 5"><path d="M0 0 L8 0 L4 5 Z" fill="#a9abb0"/></svg><svg class="a" style="left:297px;top:103px;" width="8" height="5" viewBox="0 0 8 5"><path d="M0 0 L8 0 L4 5 Z" fill="#a9abb0"/></svg><svg class="a" style="left:424px;top:103px;" width="8" height="5" viewBox="0 0 8 5"><path d="M0 0 L8 0 L4 5 Z" fill="#a9abb0"/></svg><svg class="a" style="left:458px;top:103px;" width="8" height="5" viewBox="0 0 8 5"><path d="M0 0 L8 0 L4 5 Z" fill="#a9abb0"/></svg><svg class="a" style="left:752px;top:103px;" width="8" height="5" viewBox="0 0 8 5"><path d="M0 0 L8 0 L4 5 Z" fill="#a9abb0"/></svg><svg class="a" style="left:883px;top:103px;" width="8" height="5" viewBox="0 0 8 5"><path d="M0 0 L8 0 L4 5 Z" fill="#a9abb0"/></svg><svg class="a" style="left:1012px;top:103px;" width="8" height="5" viewBox="0 0 8 5"><path d="M0 0 L8 0 L4 5 Z" fill="#a9abb0"/></svg><div class="a" style="left:88px;top:120px;width:1256px;height:65px;background:#2c2d31;"></div><div class="a" style="left:88px;top:120px;width:1256px;height:65px;border:1px solid #27282b"></div><div class="a" style="left:89px;top:153px;width:1254px;height:1px;background:#27282b;"></div><svg class="a" style="left:96px;top:131px;" width="6" height="11" viewBox="0 0 6 11"><path d="M6 0 L0 5.5 L6 11 Z" fill="#8a8c90"/></svg><svg class="a" style="left:1330px;top:131px;" width="6" height="11" viewBox="0 0 6 11"><path d="M0 0 L6 5.5 L0 11 Z" fill="#c8cacc"/></svg><div class="t" style="left:116.0px;top:131.50px;font-size:13px;font-family:'Liberation Sans',sans-serif;color:#e6e6e6;letter-spacing:0.319px;">Standard</div><div class="t" style="left:190.8px;top:133.50px;font-size:13px;font-family:'Liberation Sans',sans-serif;color:#c6c6c6;letter-spacing:0.350px;">Additional</div><div class="t" style="left:272.5px;top:133.50px;font-size:13px;font-family:'Liberation Sans',sans-serif;color:#c6c6c6;letter-spacing:0.267px;">Common Controls</div><div class="t" style="left:402.0px;top:133.50px;font-size:13px;font-family:'Liberation Sans',sans-serif;color:#c6c6c6;letter-spacing:-0.239px;">Misc</div><div class="t" style="left:449.0px;top:133.50px;font-size:13px;font-family:'Liberation Sans',sans-serif;color:#c6c6c6;letter-spacing:-0.226px;">Dialogs</div><div class="t" style="left:512.5px;top:133.50px;font-size:13px;font-family:'Liberation Sans',sans-serif;color:#c6c6c6;letter-spacing:-0.269px;">System</div><div class="t" style="left:576.0px;top:133.50px;font-size:13px;font-family:'Liberation Sans',sans-serif;color:#c6c6c6;letter-spacing:-0.004px;">BaseControls</div><div class="t" style="left:675.0px;top:133.50px;font-size:13px;font-family:'Liberation Sans',sans-serif;color:#c6c6c6;letter-spacing:-0.326px;">Data Access</div><div class="t" style="left:765.0px;top:133.50px;font-size:13px;font-family:'Liberation Sans',sans-serif;color:#c6c6c6;letter-spacing:0.127px;">Data Controls</div><div class="t" style="left:866.8px;top:133.50px;font-size:13px;font-family:'Liberation Sans',sans-serif;color:#c6c6c6;letter-spacing:-0.405px;">ACS I/O</div><div class="t" style="left:932.5px;top:133.50px;font-size:13px;font-family:'Liberation Sans',sans-serif;color:#c6c6c6;letter-spacing:-0.319px;">ACS Processing</div><div class="t" style="left:1042.5px;top:133.50px;font-size:13px;font-family:'Liberation Sans',sans-serif;color:#c6c6c6;letter-spacing:0.099px;">Abbrevia</div><div class="t" style="left:1114.5px;top:133.50px;font-size:13px;font-family:'Liberation Sans',sans-serif;color:#c6c6c6;letter-spacing:0.316px;">AggMod</div><div class="t" style="left:1184.5px;top:133.50px;font-size:13px;font-family:'Liberation Sans',sans-serif;color:#c6c6c6;letter-spacing:-0.507px;">AggPas</div><div class="t" style="left:1247.5px;top:133.50px;font-size:13px;font-family:'Liberation Sans',sans-serif;color:#c6c6c6;letter-spacing:0.515px;">Astronomy</div><div class="a" style="left:107px;top:152px;width:74px;height:3px;background:#1aa8e8;"></div><svg class="a" style="left:102px;top:159px;" width="12" height="17" viewBox="0 0 12 17"><path d="M1 1 L1 14 L4 11 L7 16 L9 15 L6 10 L10 10 Z" fill="#fff" stroke="#000" stroke-width="0.8"/></svg><svg class="a" style="left:138px;top:159px;" width="22" height="19" viewBox="0 0 22 19"><rect x="1" y="3" width="8" height="15" fill="#fff"/><rect x="2" y="5.0" width="6" height="1.3" fill="#333"/><rect x="2" y="7.6" width="6" height="1.3" fill="#333"/><rect x="2" y="10.2" width="6" height="1.3" fill="#333"/><rect x="2" y="12.8" width="6" height="1.3" fill="#333"/><rect x="2" y="15.4" width="6" height="1.3" fill="#333"/><rect x="3" y="0" width="18" height="2" fill="#fff"/></svg><svg class="a" style="left:168px;top:159px;" width="18" height="19" viewBox="0 0 18 19"><rect x="1" y="1" width="11" height="13" fill="#fff"/><rect x="2" y="3.0" width="8" height="1.3" fill="#333"/><rect x="2" y="5.8" width="8" height="1.3" fill="#333"/><rect x="2" y="8.6" width="8" height="1.3" fill="#333"/><rect x="2" y="11.399999999999999" width="8" height="1.3" fill="#333"/><path d="M10 8 L10 17 L12 15 L14 18 L15 17 L13 14 L16 14 Z" fill="#fff" stroke="#222" stroke-width="0.6"/></svg><svg class="a" style="left:191px;top:159px;" width="24" height="20" viewBox="0 0 24 20"><rect x="0.5" y="3.5" width="23" height="14" fill="#e8eaee" stroke="#4a7ad0" stroke-width="1"/><text x="7" y="14" font-size="9" fill="#333" font-family="Liberation Sans">Ok</text></svg><svg class="a" style="left:220px;top:159px;" width="24" height="20" viewBox="0 0 24 20"><text x="0" y="15" font-size="14" fill="#1aa0c8" font-family="Liberation Sans">Abc</text><rect x="0" y="17" width="8" height="1" fill="#1aa0c8"/></svg><svg class="a" style="left:246px;top:159px;" width="24" height="20" viewBox="0 0 24 20"><rect x="0.5" y="3.5" width="22" height="14" fill="#fff" stroke="#888" stroke-width="1"/><text x="2" y="14" font-size="11" fill="#111" font-family="Liberation Sans">ab</text><rect x="16" y="5" width="1" height="10" fill="#111"/></svg><svg class="a" style="left:276px;top:159px;" width="20" height="20" viewBox="0 0 20 20"><rect x="1" y="3" width="15" height="16" fill="#f8f8f8" stroke="#999" stroke-width="0.6"/><rect x="3" y="7.0" width="11" height="1.3" fill="#888"/><rect x="3" y="9.8" width="11" height="1.3" fill="#888"/><rect x="3" y="12.6" width="11" height="1.3" fill="#888"/><rect x="3" y="15.399999999999999" width="11" height="1.3" fill="#888"/><path d="M7 13 L17 2" stroke="#f0a020" stroke-width="3"/><path d="M16 3 L18 1" stroke="#e22" stroke-width="3"/></svg><svg class="a" style="left:299px;top:159px;" width="24" height="20" viewBox="0 0 24 20"><rect x="0.5" y="3.5" width="23" height="13" fill="#c8dcf4" stroke="#4a7ad0" stroke-width="1"/><text x="6" y="13.5" font-size="9" fill="#223" font-family="Liberation Sans">on</text></svg><svg class="a" style="left:331px;top:159px;" width="17" height="19" viewBox="0 0 17 19"><rect x="0.5" y="2.5" width="15" height="15" fill="#dde6f6" stroke="#4a6ac0" stroke-width="1"/><path d="M3 9 L7 13 L13 5" stroke="#1a2ad8" stroke-width="2.2" fill="none"/></svg><svg class="a" style="left:357px;top:159px;" width="17" height="19" viewBox="0 0 17 19"><circle cx="8" cy="10" r="7" fill="#fff"/><circle cx="8" cy="10" r="3.5" fill="#1a3ad8"/></svg><svg class="a" style="left:382px;top:159px;" width="19" height="19" viewBox="0 0 19 19"><rect x="1" y="2" width="12" height="16" fill="#fff"/><rect x="2" y="4.0" width="8" height="1.3" fill="#333"/><rect x="2" y="6.6" width="8" height="1.3" fill="#333"/><rect x="2" y="9.2" width="8" height="1.3" fill="#333"/><rect x="2" y="11.8" width="8" height="1.3" fill="#333"/><rect x="2" y="14.4" width="8" height="1.3" fill="#333"/><rect x="14" y="2" width="3" height="16" fill="#ddd"/></svg><svg class="a" style="left:409px;top:159px;" width="19" height="19" viewBox="0 0 19 19"><rect x="1" y="2" width="17" height="15" fill="#fff"/><rect x="3" y="4" width="13" height="1.3" fill="#333"/><rect x="3" y="7" width="13" height="1.3" fill="#333"/><rect x="3" y="10" width="13" height="1.3" fill="#333"/><rect x="3" y="13" width="13" height="1.3" fill="#333"/><rect x="0" y="0" width="19" height="2" fill="#fff"/></svg><svg class="a" style="left:435px;top:159px;" width="21" height="19" viewBox="0 0 21 19"><rect x="0" y="8" width="21" height="5" fill="#ccc"/><path d="M0 10.5 L3 8 L3 13 Z M21 10.5 L18 8 L18 13 Z" fill="#fff"/><rect x="7" y="8" width="7" height="5" fill="#888"/></svg><svg class="a" style="left:464px;top:159px;" width="17" height="19" viewBox="0 0 17 19"><rect x="0" y="2" width="17" height="17" fill="#f0f0f0"/></svg><svg class="a" style="left:491px;top:159px;" width="18" height="19" viewBox="0 0 18 19"><rect x="0" y="2" width="17" height="17" fill="#f2f2f2"/><rect x="2" y="0" width="6" height="2" fill="#4a6ac0"/><rect x="5" y="6" width="9" height="1.3" fill="#444"/><rect x="5" y="9" width="9" height="1.3" fill="#444"/><rect x="5" y="12" width="9" height="1.3" fill="#444"/><rect x="5" y="15" width="9" height="1.3" fill="#444"/><circle cx="3" cy="6.5" r="1" fill="#444"/><circle cx="3" cy="9.5" r="1" fill="#444"/><circle cx="3" cy="12.5" r="1" fill="#444"/></svg><svg class="a" style="left:518px;top:159px;" width="18" height="19" viewBox="0 0 18 19"><rect x="0" y="2" width="17" height="17" fill="#f2f2f2"/><rect x="2" y="0" width="6" height="2" fill="#4a6ac0"/><path d="M2 7 L4 9 L6 5 M2 12 L4 14 L6 10" stroke="#333" stroke-width="1" fill="none"/><rect x="8" y="7" width="8" height="1.3" fill="#444"/><rect x="8" y="10" width="8" height="1.3" fill="#444"/><rect x="8" y="13" width="8" height="1.3" fill="#444"/></svg><svg class="a" style="left:545px;top:159px;" width="18" height="19" viewBox="0 0 18 19"><rect x="0.5" y="2.5" width="17" height="17" fill="#f0f0f0" stroke="#ccc" stroke-width="0.5"/></svg><svg class="a" style="left:570px;top:159px;" width="22" height="19" viewBox="0 0 22 19"><rect x="0.5" y="1.5" width="21" height="17" fill="#fff" stroke="#4a7ad0" stroke-width="1.5"/><rect x="3" y="6" width="16" height="9" fill="#d8e2f2" stroke="#4a7ad0" stroke-width="0.8"/><rect x="19" y="1" width="2" height="2" fill="#e22"/></svg><svg class="a" style="left:597px;top:159px;" width="22" height="21" viewBox="0 0 22 21"><rect x="1" y="0" width="19" height="2" fill="#eee"/><rect x="1" y="3" width="9" height="15" fill="#fff"/><rect x="2" y="5.0" width="6" height="1.3" fill="#333"/><rect x="2" y="7.6" width="6" height="1.3" fill="#333"/><rect x="2" y="10.2" width="6" height="1.3" fill="#333"/><rect x="7.5" y="11.5" width="13" height="8" fill="#dde6f6" stroke="#4a7ad0" stroke-width="1"/><text x="9" y="18.5" font-size="7" fill="#223" font-family="Liberation Sans">Ok</text></svg><div class="a" style="left:1323px;top:154px;width:1px;height:27px;background:#27282b;"></div><div class="a" style="left:1325px;top:160px;width:9px;height:16px;border-radius:5px;background:#a8a9ad"></div><svg class="a" style="left:1348px;top:121px;" width="18" height="23" viewBox="0 0 18 23"><path d="M9 1 L12 4 L9 8 L11 12 L8 13" stroke="#d22" stroke-width="2" fill="none"/><path d="M7 11 L12 12" stroke="#2a4" stroke-width="1"/><text x="1" y="22" font-size="10" fill="#000" font-family="Liberation Sans">64</text></svg><svg class="a" style="left:1347px;top:151px;" width="20" height="19" viewBox="0 0 20 19"><defs><linearGradient id="bda" x1="0" y1="0" x2="0" y2="1"><stop offset="0" stop-color="#e8f4ff"/><stop offset="1" stop-color="#2a8ee0"/></linearGradient></defs><path d="M6 0 L13 0 L13 8 L19 8 L9.5 18 L0 8 L6 8 Z" fill="url(#bda)"/></svg><div class="a" style="left:87px;top:185px;width:1285px;height:1px;background:#27282b;"></div><div class="a" style="left:87px;top:189px;width:1285px;height:1px;background:#27282b;"></div><div class="a" style="left:722px;top:185px;width:4px;height:4px;border-radius:50%;background:#9a9b9e;"></div><div class="a" style="left:728px;top:185px;width:4px;height:4px;border-radius:50%;background:#9a9b9e;"></div><div class="a" style="left:734px;top:185px;width:4px;height:4px;border-radius:50%;background:#9a9b9e;"></div><div class="a" style="left:88px;top:190px;width:284px;height:774px;background:#323337;"></div><div class="a" style="left:88px;top:189px;width:284px;height:16px;background:#fdfbc6;"></div><div class="t" style="left:163.0px;top:189.50px;font-size:13px;font-family:'Liberation Sans',sans-serif;font-weight:bold;color:#000;letter-spacing:0.295px;">Object Inspector</div><svg class="a" style="left:345px;top:192px;" width="10" height="11" viewBox="0 0 10 11"><rect x="2" y="0" width="6" height="2" fill="#111"/><rect x="3" y="2" width="4" height="5" fill="#111"/><rect x="1" y="6" width="8" height="1.5" fill="#111"/><rect x="4.5" y="7" width="1" height="4" fill="#111"/></svg><svg class="a" style="left:359px;top:192px;" width="10" height="10" viewBox="0 0 10 10"><path d="M1 1 L9 9 M9 1 L1 9" stroke="#0a1a7a" stroke-width="2.4"/></svg><div class="t" style="left:92.0px;top:213.50px;font-size:13px;font-family:'Liberation Sans',sans-serif;font-weight:bold;color:#f0f0f0;letter-spacing:0.062px;">Components</div><div class="a" style="left:106px;top:228px;width:13px;height:1px;background:#f0f0f0;"></div><div class="a" style="left:178px;top:206px;width:162px;height:31px;background:#2b2c30;border-radius:2px"></div><div class="t" style="left:187.0px;top:213.50px;font-size:13px;font-family:'Liberation Sans',sans-serif;font-weight:bold;color:#7e7f83;letter-spacing:0.738px;">(filter)</div><div class="a" style="left:348px;top:205px;width:19px;height:32px;background:#46474b;border-radius:2px"></div><svg class="a" style="left:351px;top:214px;" width="13" height="13" viewBox="0 0 13 13"><path d="M0 0 L13 0 L8 6 L8 13 L5 13 L5 6 Z" fill="#d8d8d8"/></svg><div class="a" style="left:92px;top:241px;width:276px;height:119px;background:#303135;border:1px solid #28292c"></div><div class="a" style="left:222px;top:365px;width:4px;height:4px;border-radius:50%;background:#a0a1a4;"></div><div class="a" style="left:228px;top:365px;width:4px;height:4px;border-radius:50%;background:#a0a1a4;"></div><div class="a" style="left:234px;top:365px;width:4px;height:4px;border-radius:50%;background:#a0a1a4;"></div><div class="t" style="left:93.0px;top:381.50px;font-size:13px;font-family:'Liberation Sans',sans-serif;font-weight:bold;color:#f0f0f0;letter-spacing:0.411px;">Properties</div><div class="a" style="left:93px;top:396px;width:8px;height:1px;background:#f0f0f0;"></div><div class="a" style="left:168px;top:373px;width:172px;height:31px;background:#2b2c30;border-radius:2px"></div><div class="t" style="left:176.0px;top:381.50px;font-size:13px;font-family:'Liberation Sans',sans-serif;font-weight:bold;color:#7e7f83;letter-spacing:0.738px;">(filter)</div><div class="a" style="left:348px;top:372px;width:19px;height:32px;background:#46474b;border-radius:2px"></div><svg class="a" style="left:351px;top:381px;" width="13" height="13" viewBox="0 0 13 13"><path d="M0 0 L13 0 L8 6 L8 13 L5 13 L5 6 Z" fill="#d8d8d8"/></svg><div class="t" style="left:96.0px;top:418.50px;font-size:13px;font-family:'Liberation Sans',sans-serif;color:#e8e8e8;letter-spacing:0.305px;">Properties</div><div class="t" style="left:174.0px;top:421.00px;font-size:13px;font-family:'Liberation Sans',sans-serif;color:#c8c8c8;letter-spacing:-0.349px;">Events</div><div class="t" style="left:229.0px;top:421.00px;font-size:13px;font-family:'Liberation Sans',sans-serif;color:#c8c8c8;letter-spacing:0.067px;">Favorites</div><div class="t" style="left:299.0px;top:421.00px;font-size:13px;font-family:'Liberation Sans',sans-serif;color:#c8c8c8;letter-spacing:0.164px;">Restricted</div><div class="a" style="left:88px;top:439px;width:78px;height:2px;background:#1aa8e8;"></div><div class="a" style="left:88px;top:441px;width:284px;height:1px;background:#28292c;"></div><div class="a" style="left:89px;top:443px;width:279px;height:444px;background:#2f3034;border:1px solid #27282b"></div><div class="a" style="left:113px;top:444px;width:1px;height:442px;background:#27282b;"></div><div class="a" style="left:351px;top:444px;width:1px;height:442px;background:#2a2b2e;"></div><div class="a" style="left:356px;top:448px;width:8px;height:434px;border-radius:4px;background:#9fa0a4"></div><div class="a" style="left:222px;top:890px;width:4px;height:4px;border-radius:50%;background:#a0a1a4;"></div><div class="a" style="left:228px;top:890px;width:4px;height:4px;border-radius:50%;background:#a0a1a4;"></div><div class="a" style="left:234px;top:890px;width:4px;height:4px;border-radius:50%;background:#a0a1a4;"></div><div class="a" style="left:88px;top:896px;width:284px;height:68px;background:#2f3034;"></div><div class="a" style="left:376px;top:189px;width:16px;height:694px;background:#fdfbc6;"></div><svg class="a" style="left:377px;top:192px;" width="13" height="12" viewBox="0 0 13 12"><path d="M2 2 L10 10 M10 2 L2 10" stroke="#0a1a7a" stroke-width="2.4"/></svg><div class="t" style="left:384px;top:544px;font-size:13px;color:#000;transform:translate(-50%,-50%) rotate(-90deg);font-family:'Liberation Sans',sans-serif;letter-spacing:0.4px">Source Editor</div><svg class="a" style="left:373px;top:568px;" width="8" height="12" viewBox="0 0 8 12"><circle cx="4" cy="3" r="1.3" fill="#555"/><circle cx="4" cy="7" r="1.3" fill="#555"/><circle cx="4" cy="11" r="1.3" fill="#555"/></svg><div class="a" style="left:376px;top:887px;width:16px;height:77px;background:#fdfbc6;"></div><svg class="a" style="left:378px;top:889px;" width="12" height="11" viewBox="0 0 12 11"><path d="M2 1 L10 9 M10 1 L2 9" stroke="#0a1a7a" stroke-width="2.4"/></svg><svg class="a" style="left:379px;top:903px;" width="10" height="9" viewBox="0 0 10 9"><rect x="0" y="3" width="2" height="3" fill="#111"/><rect x="2" y="4" width="6" height="1" fill="#111"/><rect x="6" y="1" width="2" height="7" fill="#111"/></svg><div class="a" style="left:376px;top:887px;width:16px;height:77px;overflow:hidden"><div class="t" style="left:8px;top:47px;font-size:13px;color:#000;transform:translate(-50%,-50%) rotate(-90deg);font-family:'Liberation Sans',sans-serif;letter-spacing:0.2px">Messages</div></div><svg class="a" style="left:378px;top:889px;" width="12" height="11" viewBox="0 0 12 11"><path d="M2 1 L10 9 M10 1 L2 9" stroke="#0a1a7a" stroke-width="2.4"/></svg><svg class="a" style="left:379px;top:903px;" width="10" height="9" viewBox="0 0 10 9"><rect x="0" y="3" width="2" height="3" fill="#111"/><rect x="2" y="4" width="6" height="1" fill="#111"/><rect x="6" y="1" width="2" height="7" fill="#111"/></svg><div class="a" style="left:393px;top:190px;width:977px;height:23px;background:#313236;"></div><svg class="a" style="left:396px;top:194px;" width="18" height="17" viewBox="0 0 18 17"><path d="M3 3 L3 1 M1 2 L5 2" stroke="#e22" stroke-width="1.2"/><path d="M3 3 L8 3 L12 7 L12 15 L3 15 Z" fill="#eee" stroke="#7a8aa8" stroke-width="0.8"/><path d="M5 4 L11 4 L15 8 L15 16 L5 16 Z" fill="#fff" stroke="#7a8aa8" stroke-width="0.8"/><rect x="7" y="7.0" width="6" height="1.3" fill="#2aa"/><rect x="7" y="9.2" width="6" height="1.3" fill="#d22"/><rect x="7" y="11.4" width="6" height="1.3" fill="#2aa"/><rect x="7" y="13.600000000000001" width="6" height="1.3" fill="#2aa"/></svg><svg class="a" style="left:418px;top:194px;" width="18" height="17" viewBox="0 0 18 17"><path d="M0 5 L3 7 L0 9 Z" fill="#e22"/><path d="M4 1 L10 1 L14 5 L14 16 L4 16 Z" fill="#f8f8f8" stroke="#7a8aa8" stroke-width="0.8"/><rect x="6" y="4.0" width="6" height="1.3" fill="#888"/><rect x="6" y="6.8" width="6" height="1.3" fill="#d22"/><rect x="6" y="9.6" width="6" height="1.3" fill="#888"/><rect x="6" y="12.399999999999999" width="6" height="1.3" fill="#888"/></svg><svg class="a" style="left:441px;top:202px;" width="8" height="5" viewBox="0 0 8 5"><path d="M0 0 L8 0 L4 5 Z" fill="#a9abb0"/></svg><svg class="a" style="left:455px;top:196px;" width="15" height="12" viewBox="0 0 15 12"><path d="M0 6 L6 0 L6 3 L14 3 L14 9 L6 9 L6 12 Z" fill="#c02020"/></svg><svg class="a" style="left:478px;top:196px;" width="15" height="12" viewBox="0 0 15 12"><path d="M15 6 L9 0 L9 3 L1 3 L1 9 L9 9 L9 12 Z" fill="#2a9a2a"/></svg><div class="a" style="left:497px;top:193px;width:1px;height:18px;background:#3a3b3f;"></div><div class="a" style="left:393px;top:213px;width:977px;height:36px;background:#323337;"></div><svg class="a" style="left:400px;top:223px;" width="15" height="16" viewBox="0 0 15 16"><rect x="0" y="0" width="15" height="16" fill="#f5d23a"/><text x="0.5" y="11" font-size="7.5" font-weight="bold" fill="#111" font-family="Liberation Sans">ppr</text></svg><div class="t" style="left:417.8px;top:225.00px;font-size:13px;font-family:'Liberation Sans',sans-serif;color:#d0d0d0;letter-spacing:0.336px;">edits_extrahint.ppr</div><svg class="a" style="left:546px;top:223px;" width="12" height="16" viewBox="0 0 12 16"><path d="M0.5 0.5 L7.5 0.5 L11.5 4.5 L11.5 15.5 L0.5 15.5 Z" fill="#fffbe0" stroke="#444" stroke-width="0.8"/><rect x="2" y="5.0" width="7" height="1.3" fill="#2aa"/><rect x="2" y="7.4" width="7" height="1.3" fill="#d22"/><rect x="2" y="9.8" width="7" height="1.3" fill="#2aa"/><rect x="2" y="12.2" width="7" height="1.3" fill="#2aa"/></svg><div class="t" style="left:564.6px;top:223.00px;font-size:13px;font-family:'Liberation Sans',sans-serif;color:#e8e8e8;letter-spacing:0.364px;">customedits</div><div class="a" style="left:539px;top:243px;width:107px;height:2px;background:#1aa8e8;"></div><div class="a" style="left:395px;top:247px;width:973px;height:516px;background:#2c2d31;"></div><div class="a" style="left:399px;top:251px;width:936px;height:511px;background:#000;"></div><div class="a" style="left:443px;top:251px;width:1px;height:511px;background:#8a8a8a;"></div><div class="t" style="left:457px;top:253.42px;font-size:12.5px;letter-spacing:-0.5px;font-family:'Liberation Mono',monospace;">    <b style="color:#7ecfbf">constructor</b> <span style="color:#f2f2f2">Create</span><span style="color:#1ec8d8">(</span><span style="color:#f2f2f2">AOwner</span><span style="color:#1ec8d8">:</span> <span style="color:#f2f2f2">TComponent</span><span style="color:#1ec8d8">)</span><span style="color:#1ec8d8">;</span> <b style="color:#a6c2ea">override</b><span style="color:#1ec8d8">;</span></div><div class="a" style="left:432px;top:261px;width:2px;height:2px;background:#dcdcdc;"></div><div class="t" style="left:457px;top:269.42px;font-size:12.5px;letter-spacing:-0.5px;font-family:'Liberation Mono',monospace;">    <b style="color:#7ecfbf">destructor</b> <span style="color:#f2f2f2">Destroy</span><span style="color:#1ec8d8">;</span> <b style="color:#a6c2ea">override</b><span style="color:#1ec8d8">;</span></div><div class="a" style="left:432px;top:277px;width:2px;height:2px;background:#dcdcdc;"></div><div class="t" style="left:457px;top:285.42px;font-size:12.5px;letter-spacing:-0.5px;font-family:'Liberation Mono',monospace;">  <b style="color:#7ecfbf">end</b><span style="color:#1ec8d8">;</span></div><div class="t" style="left:423.0px;top:286.05px;font-size:11.67px;font-family:'Liberation Mono',monospace;color:#ececec;">35</div><div class="t" style="left:457px;top:301.42px;font-size:12.5px;letter-spacing:-0.5px;font-family:'Liberation Mono',monospace;"></div><div class="a" style="left:432px;top:309px;width:2px;height:2px;background:#dcdcdc;"></div><div class="t" style="left:457px;top:317.42px;font-size:12.5px;letter-spacing:-0.5px;font-family:'Liberation Mono',monospace;"><b style="color:#7ecfbf">implementation</b></div><div class="a" style="left:432px;top:325px;width:2px;height:2px;background:#dcdcdc;"></div><div class="t" style="left:457px;top:333.42px;font-size:12.5px;letter-spacing:-0.5px;font-family:'Liberation Mono',monospace;"></div><div class="a" style="left:432px;top:341px;width:2px;height:2px;background:#dcdcdc;"></div><div class="t" style="left:457px;top:349.42px;font-size:12.5px;letter-spacing:-0.5px;font-family:'Liberation Mono',monospace;"><span style="color:#e8201e">{ TCustomFontEdit }</span></div><div class="a" style="left:432px;top:357px;width:2px;height:2px;background:#dcdcdc;"></div><div class="t" style="left:457px;top:365.42px;font-size:12.5px;letter-spacing:-0.5px;font-family:'Liberation Mono',monospace;"></div><div class="t" style="left:423.0px;top:366.05px;font-size:11.67px;font-family:'Liberation Mono',monospace;color:#ececec;">40</div><div class="t" style="left:457px;top:381.42px;font-size:12.5px;letter-spacing:-0.5px;font-family:'Liberation Mono',monospace;"><b style="color:#7ecfbf">procedure</b> <span style="color:#f2f2f2">TCustomFontEdit</span><span style="color:#1ec8d8">.</span><span style="color:#f2f2f2">DrawPlaceholderText</span><span style="color:#1ec8d8">(</span><b style="color:#7ecfbf">constref</b> <span style="color:#f2f2f2">ARect</span><span style="color:#1ec8d8">:</span> <span style="color:#f2f2f2">TfpgRect</span><span style="color:#1ec8d8">)</span><span style="color:#1ec8d8">;</span></div><div class="a" style="left:432px;top:389px;width:2px;height:2px;background:#dcdcdc;"></div><div class="t" style="left:457px;top:397.42px;font-size:12.5px;letter-spacing:-0.5px;font-family:'Liberation Mono',monospace;"><b style="color:#7ecfbf">begin</b></div><div class="a" style="left:432px;top:405px;width:2px;height:2px;background:#dcdcdc;"></div><div class="a" style="left:413px;top:399px;width:6px;height:6px;border-radius:50%;background:radial-gradient(circle at 35% 35%,#e8f4ff,#3a8ee0)"></div><div class="t" style="left:457px;top:413.42px;font-size:12.5px;letter-spacing:-0.5px;font-family:'Liberation Mono',monospace;">  <span style="color:#e8201e">// Canvas.SetFont(FExtraHintFont);</span></div><div class="a" style="left:432px;top:421px;width:2px;height:2px;background:#dcdcdc;"></div><div class="t" style="left:457px;top:429.42px;font-size:12.5px;letter-spacing:-0.5px;font-family:'Liberation Mono',monospace;">  <span style="color:#f2f2f2">Canvas</span><span style="color:#1ec8d8">.</span><span style="color:#f2f2f2">SetFont</span><span style="color:#1ec8d8">(</span><span style="color:#f2f2f2">FExtraHintFont</span><span style="color:#1ec8d8">)</span><span style="color:#1ec8d8">;</span></div><div class="a" style="left:432px;top:437px;width:2px;height:2px;background:#dcdcdc;"></div><div class="a" style="left:413px;top:431px;width:6px;height:6px;border-radius:50%;background:radial-gradient(circle at 35% 35%,#e8f4ff,#3a8ee0)"></div><div class="t" style="left:457px;top:445.42px;font-size:12.5px;letter-spacing:-0.5px;font-family:'Liberation Mono',monospace;">  <span style="color:#f2f2f2">fpgStyle</span><span style="color:#1ec8d8">.</span><span style="color:#f2f2f2">DrawPlaceholderText</span><span style="color:#1ec8d8">(</span><span style="color:#f2f2f2">Canvas</span><span style="color:#1ec8d8">,</span> <span style="color:#f2f2f2">ARect</span><span style="color:#1ec8d8">,</span> <span style="color:#f2f2f2">ExtraHint</span><span style="color:#1ec8d8">)</span><span style="color:#1ec8d8">;</span></div><div class="t" style="left:423.0px;top:446.05px;font-size:11.67px;font-family:'Liberation Mono',monospace;color:#ececec;">45</div><div class="a" style="left:413px;top:447px;width:6px;height:6px;border-radius:50%;background:radial-gradient(circle at 35% 35%,#e8f4ff,#3a8ee0)"></div><div class="t" style="left:457px;top:461.42px;font-size:12.5px;letter-spacing:-0.5px;font-family:'Liberation Mono',monospace;">  <span style="color:#f2f2f2">Canvas</span><span style="color:#1ec8d8">.</span><span style="color:#f2f2f2">SetFont</span><span style="color:#1ec8d8">(</span><span style="color:#f2f2f2">Font</span><span style="color:#1ec8d8">)</span><span style="color:#1ec8d8">;</span></div><div class="a" style="left:432px;top:469px;width:2px;height:2px;background:#dcdcdc;"></div><div class="a" style="left:413px;top:463px;width:6px;height:6px;border-radius:50%;background:radial-gradient(circle at 35% 35%,#e8f4ff,#3a8ee0)"></div><div class="t" style="left:457px;top:477.42px;font-size:12.5px;letter-spacing:-0.5px;font-family:'Liberation Mono',monospace;"><b style="color:#7ecfbf">end</b><span style="color:#1ec8d8">;</span></div><div class="a" style="left:432px;top:485px;width:2px;height:2px;background:#dcdcdc;"></div><div class="a" style="left:413px;top:479px;width:6px;height:6px;border-radius:50%;background:radial-gradient(circle at 35% 35%,#e8f4ff,#3a8ee0)"></div><div class="t" style="left:457px;top:493.42px;font-size:12.5px;letter-spacing:-0.5px;font-family:'Liberation Mono',monospace;"></div><div class="a" style="left:432px;top:501px;width:2px;height:2px;background:#dcdcdc;"></div><div class="t" style="left:457px;top:509.42px;font-size:12.5px;letter-spacing:-0.5px;font-family:'Liberation Mono',monospace;"><b style="color:#7ecfbf">constructor</b> <span style="color:#f2f2f2">TCustomFontEdit</span><span style="color:#1ec8d8">.</span><span style="color:#f2f2f2">Create</span><span style="color:#1ec8d8">(</span><span style="color:#f2f2f2">AOwner</span><span style="color:#1ec8d8">:</span> <span style="color:#f2f2f2">TComponent</span><span style="color:#1ec8d8">)</span><span style="color:#1ec8d8">;</span></div><div class="a" style="left:432px;top:517px;width:2px;height:2px;background:#dcdcdc;"></div><div class="t" style="left:457px;top:525.42px;font-size:12.5px;letter-spacing:-0.5px;font-family:'Liberation Mono',monospace;"><b style="color:#7ecfbf">begin</b></div><div class="t" style="left:423.0px;top:526.05px;font-size:11.67px;font-family:'Liberation Mono',monospace;color:#ececec;">50</div><div class="a" style="left:413px;top:527px;width:6px;height:6px;border-radius:50%;background:radial-gradient(circle at 35% 35%,#e8f4ff,#3a8ee0)"></div><div class="t" style="left:457px;top:541.42px;font-size:12.5px;letter-spacing:-0.5px;font-family:'Liberation Mono',monospace;">  <b style="color:#7ecfbf">inherited</b> <span style="color:#f2f2f2">Create</span><span style="color:#1ec8d8">(</span><span style="color:#f2f2f2">AOwner</span><span style="color:#1ec8d8">)</span><span style="color:#1ec8d8">;</span></div><div class="a" style="left:432px;top:549px;width:2px;height:2px;background:#dcdcdc;"></div><div class="a" style="left:413px;top:543px;width:6px;height:6px;border-radius:50%;background:radial-gradient(circle at 35% 35%,#e8f4ff,#3a8ee0)"></div><div class="t" style="left:457px;top:557.42px;font-size:12.5px;letter-spacing:-0.5px;font-family:'Liberation Mono',monospace;"></div><div class="a" style="left:432px;top:565px;width:2px;height:2px;background:#dcdcdc;"></div><div class="t" style="left:457px;top:573.42px;font-size:12.5px;letter-spacing:-0.5px;font-family:'Liberation Mono',monospace;">  <span style="color:#f2f2f2">FExtraHintFont</span> <span style="color:#1ec8d8">:</span><span style="color:#1ec8d8">=</span> <span style="color:#f2f2f2">fpgGetFont</span><span style="color:#1ec8d8">(</span><span style="color:#f2f2f2">&#x27;DejaVu Sans-10:bold:italic:underline&#x27;</span><span style="color:#1ec8d8">)</span><span style="color:#1ec8d8">;</span></div><div class="a" style="left:432px;top:581px;width:2px;height:2px;background:#dcdcdc;"></div><div class="a" style="left:413px;top:575px;width:6px;height:6px;border-radius:50%;background:radial-gradient(circle at 35% 35%,#e8f4ff,#3a8ee0)"></div><div class="t" style="left:457px;top:589.42px;font-size:12.5px;letter-spacing:-0.5px;font-family:'Liberation Mono',monospace;"><b style="color:#7ecfbf">end</b><span style="color:#1ec8d8">;</span></div><div class="a" style="left:432px;top:597px;width:2px;height:2px;background:#dcdcdc;"></div><div class="a" style="left:413px;top:591px;width:6px;height:6px;border-radius:50%;background:radial-gradient(circle at 35% 35%,#e8f4ff,#3a8ee0)"></div><div class="t" style="left:457px;top:605.42px;font-size:12.5px;letter-spacing:-0.5px;font-family:'Liberation Mono',monospace;"></div><div class="t" style="left:423.0px;top:606.05px;font-size:11.67px;font-family:'Liberation Mono',monospace;color:#ececec;">55</div><div class="t" style="left:457px;top:621.42px;font-size:12.5px;letter-spacing:-0.5px;font-family:'Liberation Mono',monospace;"><b style="color:#7ecfbf">destructor</b> <span style="color:#f2f2f2">TCustomFontEdit</span><span style="color:#1ec8d8">.</span><span style="color:#f2f2f2">Destroy</span><span style="color:#1ec8d8">;</span></div><div class="a" style="left:432px;top:629px;width:2px;height:2px;background:#dcdcdc;"></div><div class="t" style="left:457px;top:637.42px;font-size:12.5px;letter-spacing:-0.5px;font-family:'Liberation Mono',monospace;"><b style="color:#7ecfbf">begin</b></div><div class="a" style="left:432px;top:645px;width:2px;height:2px;background:#dcdcdc;"></div><div class="a" style="left:413px;top:639px;width:6px;height:6px;border-radius:50%;background:radial-gradient(circle at 35% 35%,#e8f4ff,#3a8ee0)"></div><div class="t" style="left:457px;top:653.42px;font-size:12.5px;letter-spacing:-0.5px;font-family:'Liberation Mono',monospace;">  <span style="color:#f2f2f2">FExtraHintFont</span><span style="color:#1ec8d8">.</span><span style="color:#f2f2f2">Free</span><span style="color:#1ec8d8">;</span></div><div class="t" style="left:423.0px;top:654.05px;font-size:11.67px;font-family:'Liberation Mono',monospace;color:#ececec;">58</div><div class="a" style="left:413px;top:655px;width:6px;height:6px;border-radius:50%;background:radial-gradient(circle at 35% 35%,#e8f4ff,#3a8ee0)"></div><div class="t" style="left:457px;top:669.42px;font-size:12.5px;letter-spacing:-0.5px;font-family:'Liberation Mono',monospace;">  <b style="color:#7ecfbf">inherited</b> <span style="color:#f2f2f2">Destroy</span><span style="color:#1ec8d8">;</span></div><div class="a" style="left:432px;top:677px;width:2px;height:2px;background:#dcdcdc;"></div><div class="a" style="left:413px;top:671px;width:6px;height:6px;border-radius:50%;background:radial-gradient(circle at 35% 35%,#e8f4ff,#3a8ee0)"></div><div class="t" style="left:457px;top:685.42px;font-size:12.5px;letter-spacing:-0.5px;font-family:'Liberation Mono',monospace;"><b style="color:#7ecfbf">end</b><span style="color:#1ec8d8">;</span></div><div class="t" style="left:423.0px;top:686.05px;font-size:11.67px;font-family:'Liberation Mono',monospace;color:#ececec;">60</div><div class="a" style="left:413px;top:687px;width:6px;height:6px;border-radius:50%;background:radial-gradient(circle at 35% 35%,#e8f4ff,#3a8ee0)"></div><div class="t" style="left:457px;top:701.42px;font-size:12.5px;letter-spacing:-0.5px;font-family:'Liberation Mono',monospace;"></div><div class="a" style="left:432px;top:709px;width:2px;height:2px;background:#dcdcdc;"></div><div class="t" style="left:457px;top:717.42px;font-size:12.5px;letter-spacing:-0.5px;font-family:'Liberation Mono',monospace;"><span style="color:#e8201e">{ TCustomAlignmentEdit }</span></div><div class="a" style="left:432px;top:725px;width:2px;height:2px;background:#dcdcdc;"></div><div class="t" style="left:457px;top:733.42px;font-size:12.5px;letter-spacing:-0.5px;font-family:'Liberation Mono',monospace;"></div><div class="a" style="left:432px;top:741px;width:2px;height:2px;background:#dcdcdc;"></div><div class="t" style="left:457px;top:749.42px;font-size:12.5px;letter-spacing:-0.5px;font-family:'Liberation Mono',monospace;"><b style="color:#7ecfbf">procedure</b> <span style="color:#f2f2f2">TCustomAlignmentEdit</span><span style="color:#1ec8d8">.</span><span style="color:#f2f2f2">DrawPlaceholderText</span><span style="color:#1ec8d8">(</span><b style="color:#7ecfbf">constref</b> <span style="color:#f2f2f2">ARect</span><span style="color:#1ec8d8">:</span> <span style="color:#f2f2f2">TfpgRect</span><span style="color:#1ec8d8">)</span><span style="color:#1ec8d8">;</span></div><div class="a" style="left:432px;top:757px;width:2px;height:2px;background:#dcdcdc;"></div><div class="a" style="left:1335px;top:251px;width:14px;height:511px;background:#fff;"></div><div class="a" style="left:1336px;top:252px;width:12px;height:24px;background:#e6e6e6;"></div><div class="a" style="left:1337px;top:276px;width:10px;height:176px;background:#444;"></div><div class="a" style="left:1337px;top:452px;width:10px;height:195px;background:#8e8e8e;"></div><div class="a" style="left:1337px;top:647px;width:10px;height:114px;background:#6f6f6f;"></div><div class="a" style="left:1366px;top:247px;width:1px;height:516px;background:#2a2b2e;"></div><div class="a" style="left:1353px;top:457px;width:8px;height:186px;border-radius:4px;background:#9fa0a4"></div><div class="a" style="left:403px;top:767px;width:555px;height:8px;border-radius:4px;background:#9fa0a4"></div><div class="a" style="left:393px;top:776px;width:977px;height:39px;background:#313236;"></div><div class="a" style="left:395px;top:782px;width:113px;height:2px;background:#1aa8e8;"></div><svg class="a" style="left:403px;top:788px;" width="15" height="16" viewBox="0 0 15 16"><path d="M0.5 1.5 L7.5 1.5 L11.5 5.5 L11.5 14.5 L0.5 14.5 Z" fill="#fffbe0" stroke="#444" stroke-width="0.8"/><rect x="2" y="5.0" width="7" height="1.3" fill="#2aa"/><rect x="2" y="7.6" width="7" height="1.3" fill="#d22"/><rect x="2" y="10.2" width="7" height="1.3" fill="#2aa"/><path d="M5 12 L13 3" stroke="#f0b020" stroke-width="2.5"/><path d="M12.5 3.5 L14.5 1" stroke="#e22" stroke-width="2.5"/></svg><div class="t" style="left:420.5px;top:790.00px;font-size:13px;font-family:'Liberation Sans',sans-serif;color:#e8e8e8;letter-spacing:0.103px;">Source Editor</div><div class="a" style="left:393px;top:815px;width:977px;height:1px;background:#2a2b2e;"></div><div class="a" style="left:393px;top:816px;width:977px;height:21px;background:#303135;"></div><div class="t" style="left:407.5px;top:819.50px;font-size:13px;font-family:'Liberation Sans',sans-serif;font-weight:bold;color:#f0f0f0;letter-spacing:0.228px;">58: 23</div><div class="t" style="left:643.0px;top:819.50px;font-size:13px;font-family:'Liberation Sans',sans-serif;font-weight:bold;color:#f0f0f0;letter-spacing:-0.086px;">INS</div><div class="t" style="left:692.4px;top:819.50px;font-size:13px;font-family:'Liberation Sans',sans-serif;font-weight:bold;color:#f0f0f0;letter-spacing:0.411px;">/usr/local/codetyphon/CodeOcean/pl_FpGUI/samples/edits_extrahint/customedits.pas</div><div class="a" style="left:393px;top:837px;width:977px;height:1px;background:#2a2b2e;"></div><div class="a" style="left:393px;top:838px;width:977px;height:43px;background:#323337;"></div><div class="a" style="left:398px;top:840px;width:289px;height:36px;background:#2c2d31;border-radius:2px"></div><div class="t" style="left:406.0px;top:852.00px;font-size:13px;font-family:'Liberation Sans',sans-serif;font-weight:bold;color:#85868a;letter-spacing:-0.072px;">Search</div><div class="a" style="left:687px;top:842px;width:33px;height:33px;background:#3a3b3f;border-radius:2px"></div><div class="a" style="left:729px;top:842px;width:46px;height:33px;background:#3a3b3f;border-radius:2px"></div><div class="a" style="left:784px;top:842px;width:46px;height:33px;background:#3a3b3f;border-radius:2px"></div><div class="a" style="left:839px;top:842px;width:46px;height:33px;background:#3a3b3f;border-radius:2px"></div><div class="a" style="left:894px;top:842px;width:46px;height:33px;background:#3a3b3f;border-radius:2px"></div><div class="a" style="left:949px;top:842px;width:33px;height:33px;background:#3a3b3f;border-radius:2px"></div><div class="a" style="left:991px;top:842px;width:33px;height:33px;background:#3a3b3f;border-radius:2px"></div><svg class="a" style="left:700px;top:856px;" width="9" height="5" viewBox="0 0 9 5"><path d="M0 0 L9 0 L4.5 5 Z" fill="#d8d8d8"/></svg><svg class="a" style="left:746px;top:853px;" width="10" height="10" viewBox="0 0 10 10"><path d="M3 0 L7 0 L7 5 L10 5 L5 10 L0 5 L3 5 Z" fill="#6a9ee8"/></svg><svg class="a" style="left:801px;top:853px;" width="10" height="10" viewBox="0 0 10 10"><path d="M5 0 L10 5 L7 5 L7 10 L3 10 L3 5 L0 5 Z" fill="#6a9ee8"/></svg><svg class="a" style="left:856px;top:852px;" width="11" height="12" viewBox="0 0 11 12"><path d="M0 0 L11 0 L5.5 7 Z" fill="#7aaef0"/><rect x="0" y="10" width="11" height="1.5" fill="#7aaef0"/></svg><svg class="a" style="left:911px;top:852px;" width="11" height="12" viewBox="0 0 11 12"><rect x="0" y="0" width="11" height="1.5" fill="#7aaef0"/><path d="M0 11 L11 11 L5.5 4 Z" fill="#7aaef0"/></svg><svg class="a" style="left:958px;top:851px;" width="14" height="14" viewBox="0 0 14 14"><path d="M13 1 L8 6" stroke="#b07a20" stroke-width="1.6"/><path d="M8 5 L2 8 L1 13 L6 12 L9 7 Z" fill="#f0d040"/></svg><svg class="a" style="left:1000px;top:851px;" width="14" height="14" viewBox="0 0 14 14"><circle cx="7" cy="7" r="5" fill="none" stroke="#ccc" stroke-width="2.5" stroke-dasharray="1.6 1.2"/><circle cx="7" cy="7" r="3" fill="#a03020"/></svg><div class="t" style="left:1035.0px;top:853.00px;font-size:13px;font-family:'Liberation Sans',sans-serif;font-weight:bold;color:#f2f2f2;letter-spacing:0.426px;">0 / 0</div><div class="a" style="left:1345px;top:842px;width:18px;height:18px;background:#3a3b3f;border-radius:2px"></div><svg class="a" style="left:1348px;top:845px;" width="12" height="12" viewBox="0 0 12 12"><path d="M2 2 L10 10 M10 2 L2 10" stroke="#e01818" stroke-width="2.6"/></svg><div class="a" style="left:393px;top:880px;width:977px;height:1px;background:#27282b;"></div><div class="a" style="left:393px;top:883px;width:977px;height:1px;background:#27282b;"></div><div class="a" style="left:866px;top:883px;width:4px;height:4px;border-radius:50%;background:#a0a1a4;"></div><div class="a" style="left:872px;top:883px;width:4px;height:4px;border-radius:50%;background:#a0a1a4;"></div><div class="a" style="left:878px;top:883px;width:4px;height:4px;border-radius:50%;background:#a0a1a4;"></div><div class="a" style="left:393px;top:889px;width:977px;height:75px;background:#303135;"></div><div class="a" style="left:1357px;top:889px;width:1px;height:75px;background:#2a2b2e;"></div><div class="a" style="left:1360px;top:892px;width:7px;height:67px;border-radius:4px;background:#9fa0a4"></div><div class="a" style="left:1383px;top:44px;width:504px;height:835px;background:#323337;border:1px solid #232427;border-radius:3px 3px 0 0;box-shadow:0 0 4px rgba(0,0,0,.5)"></div><div class="a" style="left:1384px;top:45px;width:502px;height:32px;background:#353639;"></div><div class="a" style="left:1392px;top:53px;width:14px;height:14px;border-radius:50%;background:#3d3e42;"></div><div class="t" style="left:1567.5px;top:57.00px;font-size:13px;font-family:'Liberation Sans',sans-serif;font-weight:bold;color:#a8a8a8;letter-spacing:-0.062px;">CodeOcean Examples</div><div class="a" style="left:1807px;top:53px;width:14px;height:14px;border-radius:50%;background:#9a9a9a;"></div><div class="a" style="left:1834px;top:53px;width:14px;height:14px;border-radius:50%;background:#9a9a9a;"></div><div class="a" style="left:1861px;top:53px;width:14px;height:14px;border-radius:50%;background:#9a9a9a;"></div><div class="a" style="left:1385px;top:77px;width:500px;height:16px;background:#fdfbc6;"></div><svg class="a" style="left:1872px;top:80px;" width="10" height="10" viewBox="0 0 10 10"><path d="M1 1 L9 9 M9 1 L1 9" stroke="#0a1a7a" stroke-width="2.4"/></svg><div class="a" style="left:1384px;top:93px;width:502px;height:26px;background:#2f3034;"></div><svg class="a" style="left:1389px;top:99px;" width="17" height="17" viewBox="0 0 17 17"><path d="M13 5 A6 6 0 0 0 3 7" stroke="#2a7ae8" stroke-width="3" fill="none"/><path d="M11 1 L16 5 L11 8 Z" fill="#2a7ae8"/><path d="M3 11 A6 6 0 0 0 13 9" stroke="#2a7ae8" stroke-width="3" fill="none"/><path d="M5 15 L0 11 L5 8 Z" fill="#2a7ae8"/></svg><svg class="a" style="left:1412px;top:99px;" width="17" height="17" viewBox="0 0 17 17"><path d="M1 10 L15 10 L15 16 L1 16 Z" fill="#2a6ac8"/><path d="M15 1 L9 8" stroke="#a07020" stroke-width="1.5"/><path d="M9 7 L3 10 L12 11 Z" fill="#f0c030"/></svg><svg class="a" style="left:1439px;top:99px;" width="17" height="17" viewBox="0 0 17 17"><defs><radialGradient id="y554" cx="35%" cy="30%"><stop offset="0" stop-color="#ffe98a"/><stop offset="1" stop-color="#d8a20a"/></radialGradient></defs><circle cx="5" cy="5" r="4" fill="url(#y554)" stroke="#9a7000" stroke-width="0.5"/><path d="M2 3 L7 8 M7 2 L4 6" stroke="#b08000" stroke-width="0.8"/><circle cx="11" cy="11" r="3.5" fill="#3a90e0"/><path d="M9 2 L14 4 L12 6 M6 14 L2 12 L4 10" stroke="#e22" stroke-width="1.5" fill="none"/></svg><svg class="a" style="left:1463px;top:99px;" width="17" height="17" viewBox="0 0 17 17"><path d="M1 6 L15 6 L15 16 L1 16 Z" fill="#f0c878"/><circle cx="11" cy="5" r="4" fill="#e040a0"/><text x="9" y="7.5" font-size="6" fill="#fff" font-family="Liberation Sans">R</text></svg><svg class="a" style="left:1487px;top:99px;" width="17" height="17" viewBox="0 0 17 17"><defs><radialGradient id="g666" cx="35%" cy="30%"><stop offset="0" stop-color="#8fc4f5"/><stop offset="1" stop-color="#1f5fb8"/></radialGradient></defs><circle cx="6" cy="6" r="6" fill="url(#g666)"/><path d="M4 3 Q8 2 7 7" stroke="#dff" stroke-width="0.8" fill="none"/><path d="M8 6 L12 6 L16 10 L16 16 L8 16 Z" fill="#f4f6fa" stroke="#7a8aa8" stroke-width="0.8"/></svg><svg class="a" style="left:1514px;top:99px;" width="17" height="17" viewBox="0 0 17 17"><path d="M3 5 L3 14 L10 14 M3 9 L10 9" stroke="#2a70d0" stroke-width="1.5" fill="none"/><rect x="1" y="3" width="4" height="3" fill="#2a70d0"/><path d="M10 1 L15 6 M15 1 L10 6" stroke="#e22" stroke-width="2"/></svg><svg class="a" style="left:1537px;top:99px;" width="17" height="17" viewBox="0 0 17 17"><defs><radialGradient id="y1066" cx="35%" cy="30%"><stop offset="0" stop-color="#ffe98a"/><stop offset="1" stop-color="#d8a20a"/></radialGradient></defs><circle cx="10" cy="6" r="6" fill="url(#y1066)" stroke="#9a7000" stroke-width="0.5"/><path d="M7 4 L12 9 M12 3 L9 7" stroke="#b08000" stroke-width="0.8"/><path d="M5 7 L10 12 L7 12 L7 15 L3 15 L3 12 L0 12 Z" fill="#22dd44" stroke="#0a6a1a" stroke-width="0.5"/><rect x="-1" y="15" width="12" height="1" fill="#2a70d0"/></svg><svg class="a" style="left:1561px;top:99px;" width="17" height="17" viewBox="0 0 17 17"><path d="M0 4 L15 4 L15 15 L0 15 Z" fill="#f0c820"/><circle cx="8" cy="9" r="3.5" fill="#cfe6ff" stroke="#556" stroke-width="1.2"/><path d="M10.45 11.45 L14.5 15.5" stroke="#888" stroke-width="2"/></svg><svg class="a" style="left:1584px;top:99px;" width="17" height="17" viewBox="0 0 17 17"><rect x="1" y="3" width="5" height="12" rx="2" fill="#c0a8e8"/><rect x="9" y="3" width="5" height="12" rx="2" fill="#c0a8e8"/><rect x="2" y="1" width="3" height="3" fill="#8a6ac8"/><rect x="10" y="1" width="3" height="3" fill="#8a6ac8"/></svg><svg class="a" style="left:1606px;top:99px;" width="17" height="17" viewBox="0 0 17 17"><path d="M5 0 L10 5 L5 10 L0 5 Z" fill="#f8e020" stroke="#333" stroke-width="0.6"/><rect x="7" y="7" width="9" height="9" rx="1" fill="#8a8ae0" stroke="#666" stroke-width="0.6"/><rect x="9" y="7" width="5" height="4" fill="#eee"/><rect x="10" y="14" width="3" height="2" fill="#888"/></svg><div class="a" style="left:1432px;top:97px;width:1px;height:20px;background:#3c3d41;"></div><div class="a" style="left:1508px;top:97px;width:1px;height:20px;background:#3c3d41;"></div><div class="a" style="left:1391px;top:126px;width:432px;height:20px;background:#2b2c30;border-radius:2px"></div><div class="a" style="left:1391px;top:126px;width:432px;height:20px;overflow:hidden"><div class="t" style="left:6.0px;top:4.00px;font-size:13px;font-family:'Liberation Sans',sans-serif;font-weight:bold;color:#f0f0f0;letter-spacing:0.426px;">/usr/local/codetyphon/CodeOcean</div></div><svg class="a" style="left:1832px;top:127px;" width="17" height="16" viewBox="0 0 17 16"><rect x="0.5" y="0.5" width="16" height="15" fill="#fff" stroke="#4a7ad0"/><rect x="0" y="0" width="17" height="2" fill="#4a7ad0"/><path d="M3 5 L7 5 L8 6 L14 6 L14 13 L3 13 Z" fill="#f0b020"/><path d="M3 9 L14 9" stroke="#fff3a0" stroke-width="1"/></svg><svg class="a" style="left:1855px;top:128px;" width="18" height="14" viewBox="0 0 18 14"><path d="M1 3 Q5 0 9 3 Q13 0 17 3 L17 13 Q13 10 9 13 Q5 10 1 13 Z" fill="#2a62c0"/></svg><div class="a" style="left:1390px;top:153px;width:146px;height:20px;background:#2b2c30;border-radius:2px"></div><div class="a" style="left:1390px;top:153px;width:146px;height:18px;overflow:hidden"><div class="t" style="left:7.0px;top:4.50px;font-size:13px;font-family:'Liberation Sans',sans-serif;font-weight:bold;color:#f0f0f0;letter-spacing:0.153px;">pl fpgui</div></div><svg class="a" style="left:1546px;top:155px;" width="18" height="16" viewBox="0 0 18 16"><path d="M0 0 L12 0 L8 5 L8 12 L4 12 L4 5 Z" fill="#e8c020" stroke="#a07a00" stroke-width="0.5"/><path d="M10 9 L16 15 M16 9 L10 15" stroke="#e01818" stroke-width="2"/></svg><svg class="a" style="left:1393px;top:185px;" width="14" height="14" viewBox="0 0 14 14"><defs><radialGradient id="y776.5" cx="35%" cy="30%"><stop offset="0" stop-color="#ffe98a"/><stop offset="1" stop-color="#d8a20a"/></radialGradient></defs><circle cx="7" cy="7" r="6.5" fill="url(#y776.5)" stroke="#9a7000" stroke-width="0.5"/><path d="M4 5 L9 10 M9 4 L6 8" stroke="#b08000" stroke-width="0.8"/></svg><div class="t" style="left:1415.0px;top:187.00px;font-size:13px;font-family:'Liberation Sans',sans-serif;font-weight:bold;color:#f0f0f0;letter-spacing:0.035px;">Visible Projects : 76/4108</div><div class="a" style="left:1385px;top:211px;width:498px;height:605px;background:#323337;border-top:1px solid #28292c"></div><div class="a" style="left:1867px;top:212px;width:1px;height:592px;background:#28292c;"></div><div class="a" style="left:1872px;top:303px;width:8px;height:175px;border-radius:4px;background:#9fa0a4"></div><div class="a" style="left:1386px;top:681px;width:481px;height:25px;background:#4886ec;"></div><div class="t" style="left:1392.0px;top:211.60px;font-size:13px;font-family:'Liberation Sans',sans-serif;font-weight:bold;color:#f4f4f4;letter-spacing:0.313px;">pl_FpGUI/samples/60_Apps/charpalette.ctpr</div><div class="t" style="left:1392.0px;top:236.60px;font-size:13px;font-family:'Liberation Sans',sans-serif;font-weight:bold;color:#f4f4f4;letter-spacing:0.318px;">pl_FpGUI/samples/60_Apps/docedit.ctpr</div><div class="t" style="left:1392.0px;top:261.60px;font-size:13px;font-family:'Liberation Sans',sans-serif;font-weight:bold;color:#f4f4f4;letter-spacing:0.322px;">pl_FpGUI/samples/60_Apps/globe.ctpr</div><div class="t" style="left:1392.0px;top:286.60px;font-size:13px;font-family:'Liberation Sans',sans-serif;font-weight:bold;color:#f4f4f4;letter-spacing:0.323px;">pl_FpGUI/samples/60_Apps/hexview.ctpr</div><div class="t" style="left:1392.0px;top:311.60px;font-size:13px;font-family:'Liberation Sans',sans-serif;font-weight:bold;color:#f4f4f4;letter-spacing:0.320px;">pl_FpGUI/samples/60_Apps/nanoedit.ctpr</div><div class="t" style="left:1392.0px;top:336.60px;font-size:13px;font-family:'Liberation Sans',sans-serif;font-weight:bold;color:#f4f4f4;letter-spacing:0.306px;">pl_FpGUI/samples/alignment_resize/alignment_resize.ctpr</div><div class="t" style="left:1392.0px;top:361.60px;font-size:13px;font-family:'Liberation Sans',sans-serif;font-weight:bold;color:#f4f4f4;letter-spacing:0.303px;">pl_FpGUI/samples/alignment/aligntest.ctpr</div><div class="t" style="left:1392.0px;top:386.60px;font-size:13px;font-family:'Liberation Sans',sans-serif;font-weight:bold;color:#f4f4f4;letter-spacing:0.312px;">pl_FpGUI/samples/animation/anim_test.ctpr</div><div class="t" style="left:1392.0px;top:411.60px;font-size:13px;font-family:'Liberation Sans',sans-serif;font-weight:bold;color:#f4f4f4;letter-spacing:0.305px;">pl_FpGUI/samples/bevel/beveltest.ctpr</div><div class="t" style="left:1392.0px;top:436.60px;font-size:13px;font-family:'Liberation Sans',sans-serif;font-weight:bold;color:#f4f4f4;letter-spacing:0.305px;">pl_FpGUI/samples/calendar/calendartest.ctpr</div><div class="t" style="left:1392.0px;top:461.60px;font-size:13px;font-family:'Liberation Sans',sans-serif;font-weight:bold;color:#f4f4f4;letter-spacing:0.302px;">pl_FpGUI/samples/chart/charttest1.ctpr</div><div class="t" style="left:1392.0px;top:486.60px;font-size:13px;font-family:'Liberation Sans',sans-serif;font-weight:bold;color:#f4f4f4;letter-spacing:0.302px;">pl_FpGUI/samples/chart/charttest2.ctpr</div><div class="t" style="left:1392.0px;top:511.60px;font-size:13px;font-family:'Liberation Sans',sans-serif;font-weight:bold;color:#f4f4f4;letter-spacing:0.294px;">pl_FpGUI/samples/colorlistbox/colorlistboxtest.ctpr</div><div class="t" style="left:1392.0px;top:536.60px;font-size:13px;font-family:'Liberation Sans',sans-serif;font-weight:bold;color:#f4f4f4;letter-spacing:0.308px;">pl_FpGUI/samples/colorwheel/colorwheel_test.ctpr</div><div class="t" style="left:1392.0px;top:561.60px;font-size:13px;font-family:'Liberation Sans',sans-serif;font-weight:bold;color:#f4f4f4;letter-spacing:0.332px;">pl_FpGUI/samples/combobox/comboboxtest.ctpr</div><div class="t" style="left:1392.0px;top:586.60px;font-size:13px;font-family:'Liberation Sans',sans-serif;font-weight:bold;color:#f4f4f4;letter-spacing:0.315px;">pl_FpGUI/samples/command_interface/test.ctpr</div><div class="t" style="left:1392.0px;top:611.60px;font-size:13px;font-family:'Liberation Sans',sans-serif;font-weight:bold;color:#f4f4f4;letter-spacing:0.315px;">pl_FpGUI/samples/customstyles/customstyles.ctpr</div><div class="t" style="left:1392.0px;top:636.60px;font-size:13px;font-family:'Liberation Sans',sans-serif;font-weight:bold;color:#f4f4f4;letter-spacing:0.307px;">pl_FpGUI/samples/dbtest/dbtest.ctpr</div><div class="t" style="left:1392.0px;top:661.60px;font-size:13px;font-family:'Liberation Sans',sans-serif;font-weight:bold;color:#f4f4f4;letter-spacing:0.325px;">pl_FpGUI/samples/drag_n_drop/dndexample.ctpr</div><div class="t" style="left:1392.0px;top:686.60px;font-size:13px;font-family:'Liberation Sans',sans-serif;font-weight:bold;color:#f4f4f4;letter-spacing:0.295px;">pl_FpGUI/samples/edits_extrahint/edits_extrahint.ctpr</div><div class="t" style="left:1392.0px;top:711.60px;font-size:13px;font-family:'Liberation Sans',sans-serif;font-weight:bold;color:#f4f4f4;letter-spacing:0.296px;">pl_FpGUI/samples/edits/edittest.ctpr</div><div class="t" style="left:1392.0px;top:736.60px;font-size:13px;font-family:'Liberation Sans',sans-serif;font-weight:bold;color:#f4f4f4;letter-spacing:0.336px;">pl_FpGUI/samples/embedded_form/demo1.ctpr</div><div class="t" style="left:1392.0px;top:761.60px;font-size:13px;font-family:'Liberation Sans',sans-serif;font-weight:bold;color:#f4f4f4;letter-spacing:0.288px;">pl_FpGUI/samples/filedialog/filedialog.ctpr</div><div class="t" style="left:1392.0px;top:786.60px;font-size:13px;font-family:'Liberation Sans',sans-serif;font-weight:bold;color:#f4f4f4;letter-spacing:0.285px;">pl_FpGUI/samples/filegrid/filegrid.ctpr</div><div class="a" style="left:1385px;top:804px;width:498px;height:1px;background:#28292c;"></div><div class="a" style="left:1390px;top:807px;width:473px;height:8px;border-radius:4px;background:#9fa0a4"></div><div class="a" style="left:1384px;top:818px;width:502px;height:1px;background:#27282b;"></div><div class="a" style="left:1384px;top:821px;width:502px;height:1px;background:#27282b;"></div><div class="a" style="left:1627px;top:821px;width:4px;height:4px;border-radius:50%;background:#a0a1a4;"></div><div class="a" style="left:1633px;top:821px;width:4px;height:4px;border-radius:50%;background:#a0a1a4;"></div><div class="a" style="left:1639px;top:821px;width:4px;height:4px;border-radius:50%;background:#a0a1a4;"></div><div class="a" style="left:1388px;top:830px;width:495px;height:45px;background:#303135;border:1px solid #27282b"></div><div class="a" style="left:485px;top:403px;width:639px;height:288px;background:#38393d;border-radius:3px 3px 0 0;box-shadow:0 0 4px rgba(0,0,0,.6)"></div><div class="a" style="left:494px;top:412px;width:14px;height:14px;border-radius:50%;background:#48494d;"></div><div class="t" style="left:758.0px;top:415.50px;font-size:13px;font-family:'Liberation Sans',sans-serif;font-weight:bold;color:#e0e0e0;letter-spacing:0.090px;">Edits Extrahint</div><div class="a" style="left:1045px;top:412px;width:14px;height:14px;border-radius:50%;background:#eab532;"></div><div class="a" style="left:1072px;top:412px;width:14px;height:14px;border-radius:50%;background:#2cb594;"></div><div class="a" style="left:1099px;top:412px;width:14px;height:14px;border-radius:50%;background:#ea5a64;"></div><div class="a" style="left:487px;top:436px;width:636px;height:254px;background:#d6d3ce;"></div><div class="t" style="left:495.5px;top:445.00px;font-size:13px;font-family:'Liberation Sans',sans-serif;color:#1e1e1e;">This example shows how ExtraHints (placeholder texts) works:</div><div class="t" style="left:495.5px;top:462.00px;font-size:13px;font-family:'Liberation Sans',sans-serif;color:#1e1e1e;">- If you want custom font or color for individual edit, see file customedits.pas in this dir</div><div class="t" style="left:495.5px;top:479.00px;font-size:13px;font-family:'Liberation Sans',sans-serif;color:#1e1e1e;">- If you want change ExtraHint globally (color, alignment, etc), see TfpgStyle.DrawPlaceholderText</div><div class="t" style="left:503.4px;top:496.00px;font-size:13px;font-family:'Liberation Sans',sans-serif;color:#1e1e1e;">method and clPlaceholderText color definition</div><div class="t" style="left:495.5px;top:513.00px;font-size:13px;font-family:'Liberation Sans',sans-serif;color:#1e1e1e;">- To change ExtraHint visibility when edit is focused click checkbox bellow</div><div class="a" style="left:497px;top:544px;width:12px;height:12px;background:#fff;border-top:1px solid #333;border-left:1px solid #333;border-bottom:1px solid #ddd;border-right:1px solid #ddd"></div><div class="t" style="left:515.0px;top:543.00px;font-size:13px;font-family:'Liberation Sans',sans-serif;color:#1e1e1e;">Hints visible if focused</div><svg class="a" style="left:646px;top:538px;" width="17" height="24" viewBox="0 0 17 24"><path d="M2.4 2.4 L14.6 13.2 L10.6 21.3 L2.4 18.4 Z" fill="#fff" stroke="#222" stroke-width="1.3" stroke-linejoin="round"/></svg><div class="a" style="left:496px;top:564px;width:235px;height:24px;background:#fff;border-top:2px solid #555;border-left:2px solid #555;border-bottom:1px solid #f4f4f4;border-right:1px solid #f4f4f4"></div><div class="a" style="left:496px;top:596px;width:235px;height:24px;background:#fff;border-top:2px solid #555;border-left:2px solid #555;border-bottom:1px solid #f4f4f4;border-right:1px solid #f4f4f4"></div><div class="t" style="left:547.0px;top:603.00px;font-size:13px;font-family:'Liberation Sans',sans-serif;color:#8c8c8c;letter-spacing:-0.050px;">TCustomAlignmentEdit</div><div class="a" style="left:496px;top:628px;width:211px;height:24px;background:#fff;border-top:2px solid #555;border-left:2px solid #555;border-bottom:1px solid #f4f4f4;border-right:1px solid #f4f4f4"></div><div class="t" style="left:500.0px;top:635.00px;font-size:13px;font-family:'Liberation Sans',sans-serif;color:#8c8c8c;letter-spacing:-0.026px;">TfpgDirectoryEdit</div><div class="a" style="left:707px;top:628px;width:24px;height:24px;background:#d6d3ce;border-top:1px solid #f4f4f4;border-left:1px solid #f4f4f4;border-bottom:2px solid #555;border-right:2px solid #555"></div><svg class="a" style="left:710px;top:632px;" width="17" height="14" viewBox="0 0 17 14"><path d="M1 2 L6 2 L7.5 4 L16 4 L16 13 L1 13 Z" fill="#8ab4e8" stroke="#2a5aa8" stroke-width="1"/><path d="M1 5 L16 5" stroke="#2a5aa8" stroke-width="0.8"/></svg><div class="a" style="left:496px;top:662px;width:235px;height:21px;background:#fff;"></div><div class="t" style="left:501.0px;top:665.50px;font-size:13px;font-family:'Liberation Sans',sans-serif;color:#8c8c8c;letter-spacing:-0.194px;">TfpgEditCombo</div><div class="a" style="left:711px;top:662px;width:18px;height:21px;background:#d6d3ce;border-top:1px solid #f4f4f4;border-left:1px solid #f4f4f4;border-bottom:2px solid #555;border-right:2px solid #555"></div><svg class="a" style="left:714px;top:669px;" width="11" height="6" viewBox="0 0 11 6"><path d="M0 0 L11 0 L5.5 6 Z" fill="#000"/></svg><div class="a" style="left:739px;top:564px;width:235px;height:24px;background:#fff;border-top:2px solid #555;border-left:2px solid #555;border-bottom:1px solid #f4f4f4;border-right:1px solid #f4f4f4"></div><div class="t" style="left:744.0px;top:569.00px;font-size:13px;font-family:'Liberation Sans',sans-serif;color:#ee1c1c;letter-spacing:-0.080px;">TCustomColorEdit</div><div class="a" style="left:739px;top:596px;width:235px;height:24px;background:#fff;border-top:2px solid #555;border-left:2px solid #555;border-bottom:1px solid #f4f4f4;border-right:1px solid #f4f4f4"></div><div class="t" style="left:744.0px;top:601.73px;font-size:14.5px;font-family:'Liberation Sans',sans-serif;font-weight:bold;font-style:italic;color:#8a8a8a;letter-spacing:0.456px;">TCustomFontEdit</div><div class="a" style="left:744px;top:615.5px;width:128px;height:1.3px;background:#8a8a8a;"></div><div class="a" style="left:739px;top:628px;width:211px;height:24px;background:#fff;border-top:2px solid #555;border-left:2px solid #555;border-bottom:1px solid #f4f4f4;border-right:1px solid #f4f4f4"></div><div class="t" style="left:744.0px;top:635.00px;font-size:13px;font-family:'Liberation Sans',sans-serif;color:#8c8c8c;letter-spacing:-0.000px;">TfpgEditButton</div><div class="a" style="left:951px;top:628px;width:24px;height:24px;background:#d6d3ce;border-top:1px solid #f4f4f4;border-left:1px solid #f4f4f4;border-bottom:2px solid #555;border-right:2px solid #555"></div><svg class="a" style="left:957px;top:638px;" width="11" height="3" viewBox="0 0 11 3"><rect x="0" y="0" width="2.5" height="2.5" fill="#111"/><rect x="4" y="0" width="2.5" height="2.5" fill="#111"/><rect x="8" y="0" width="2.5" height="2.5" fill="#111"/></svg><div class="a" style="left:739px;top:661px;width:236px;height:22px;background:#fff;border-top:2px solid #555;border-left:2px solid #555;border-bottom:1px solid #f4f4f4;border-right:1px solid #f4f4f4"></div><div class="t" style="left:742.0px;top:665.50px;font-size:13px;font-family:'Liberation Sans',sans-serif;color:#8c8c8c;letter-spacing:-0.029px;">TfpgComboBox</div><div class="a" style="left:955px;top:662px;width:18px;height:20px;background:#d6d3ce;border-top:1px solid #f4f4f4;border-left:1px solid #f4f4f4;border-bottom:2px solid #555;border-right:2px solid #555"></div><svg class="a" style="left:958px;top:669px;" width="11" height="6" viewBox="0 0 11 6"><path d="M0 0 L11 0 L5.5 6 Z" fill="#000"/></svg><div class="a" style="left:1027px;top:663px;width:92px;height:23px;background:#d6d3ce;border-top:1px solid #f4f4f4;border-left:1px solid #f4f4f4;border-bottom:2px solid #555;border-right:2px solid #555"></div><svg class="a" style="left:1035px;top:667px;" width="11" height="16" viewBox="0 0 11 16"><rect x="1" y="1" width="9" height="13" fill="#e2b070" stroke="#9a6a30" stroke-width="0.8"/><rect x="0" y="14" width="11" height="1.3" fill="#555"/></svg><div class="t" style="left:1072.0px;top:667.50px;font-size:13px;font-family:'Liberation Sans',sans-serif;color:#111;letter-spacing:0.386px;">Quit</div></body></html>
